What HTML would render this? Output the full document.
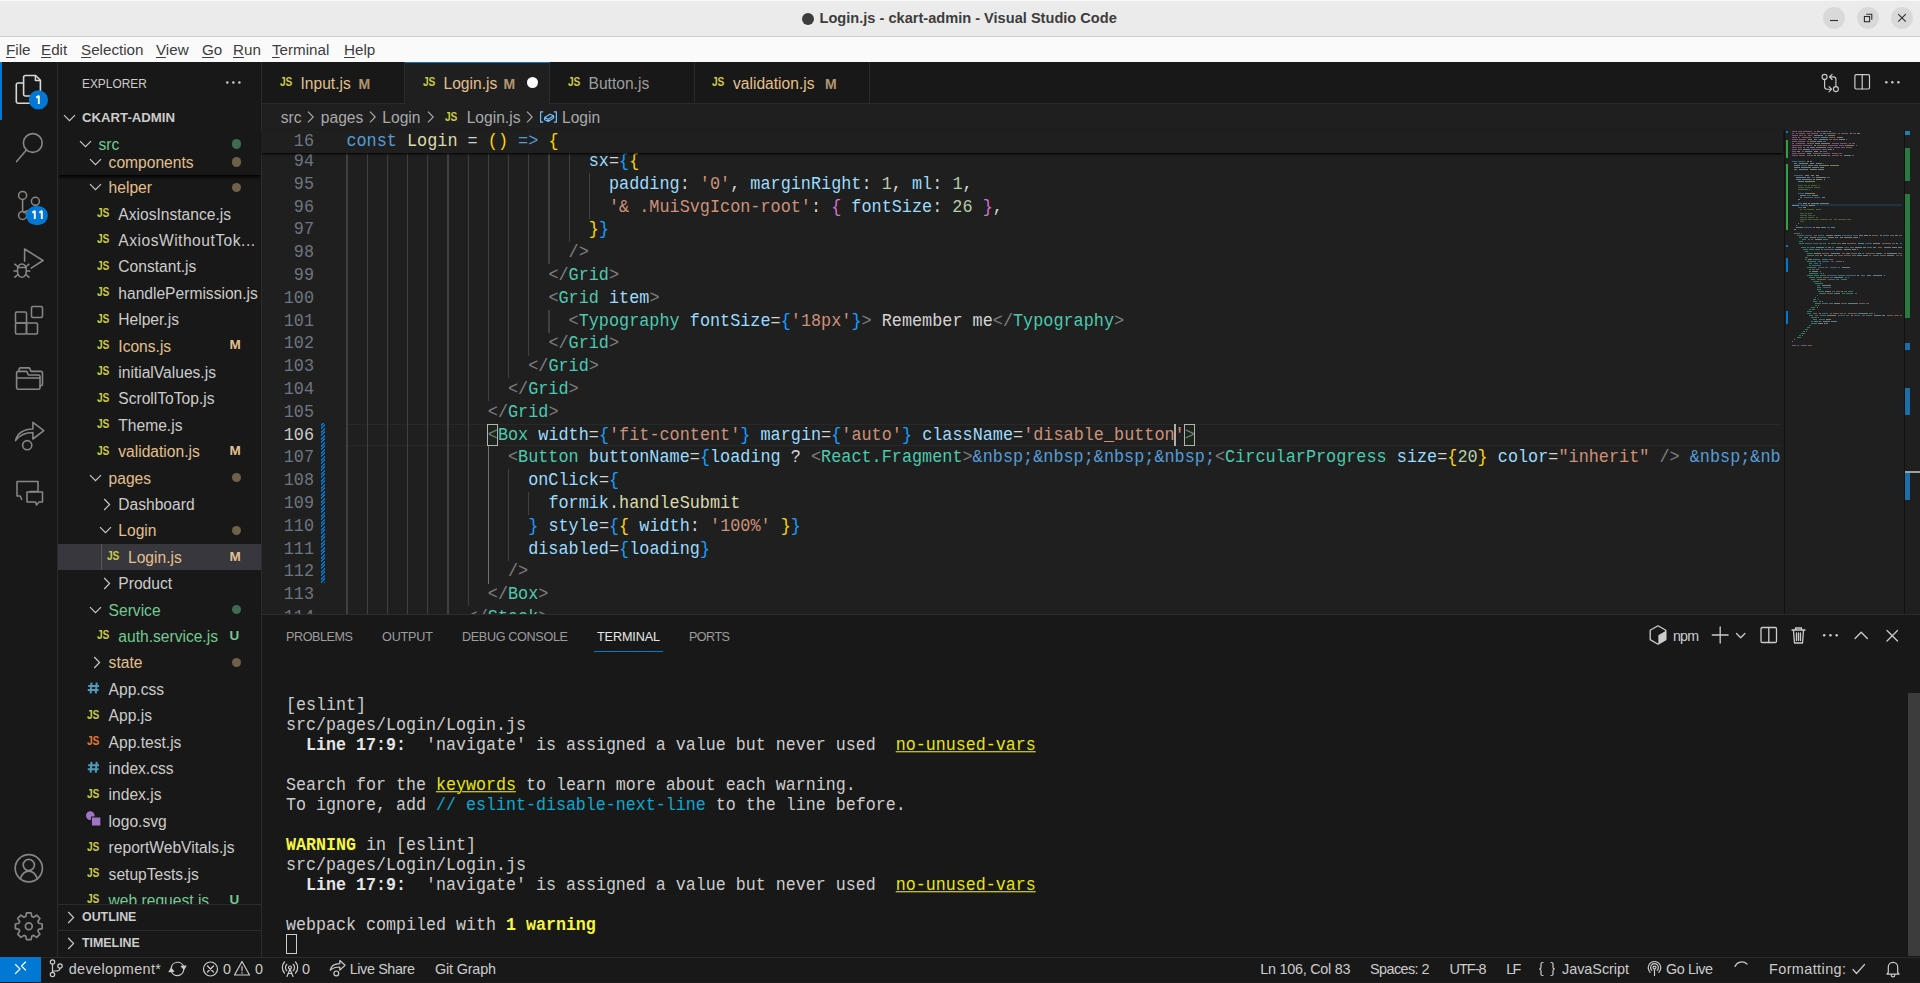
<!DOCTYPE html><html><head><meta charset='utf-8'><style>
*{box-sizing:border-box;margin:0;padding:0}
html,body{width:1920px;height:983px;overflow:hidden;background:#181818;font-family:"Liberation Sans",sans-serif;}
.a{position:absolute}
.mono{font-family:"Liberation Mono",monospace}
svg{position:absolute;overflow:visible}
</style></head><body><div class="a" style="left:0;top:0;width:1920px;height:37px;background:#ebebeb;border-bottom:1px solid #cdcdcd;border-top:1px solid #f7f7f7"></div>
<div class="a" style="left:802.3px;top:13.2px;width:12px;height:12px;border-radius:50%;background:#3d3d3d"></div>
<div class="a" style="left:819.5px;top:10px;font-size:14.6px;font-weight:bold;color:#3d3d3d;white-space:pre">Login.js - ckart-admin - Visual Studio Code</div>
<div class="a" style="left:1823px;top:7px;width:22px;height:22px;border-radius:50%;background:#d9d9d9"></div>
<div class="a" style="left:1857px;top:7px;width:22px;height:22px;border-radius:50%;background:#d9d9d9"></div>
<div class="a" style="left:1891px;top:7px;width:22px;height:22px;border-radius:50%;background:#d9d9d9"></div>
<svg style="left:0;top:0" width="1920" height="37" fill="none" stroke="#2e2e2e" stroke-width="1.1"><path d="M1830 20.5h8"/><rect x="1864.4" y="16.5" width="5.2" height="5.2"/><path d="M1866.4 14.3h5.4v5.4"/><path d="M1898.2 14.1l7.6 7.6M1905.8 14.1l-7.6 7.6"/></svg>
<div class="a" style="left:0;top:37px;width:1920px;height:25px;background:#fafafa"></div>
<div class="a" style="left:6px;top:41px;font-size:15.2px;color:#3d3d3d;white-space:pre"><u style="text-decoration-thickness:1px;text-underline-offset:2px">F</u>ile</div>
<div class="a" style="left:41px;top:41px;font-size:15.2px;color:#3d3d3d;white-space:pre"><u style="text-decoration-thickness:1px;text-underline-offset:2px">E</u>dit</div>
<div class="a" style="left:81px;top:41px;font-size:15.2px;color:#3d3d3d;white-space:pre"><u style="text-decoration-thickness:1px;text-underline-offset:2px">S</u>election</div>
<div class="a" style="left:156px;top:41px;font-size:15.2px;color:#3d3d3d;white-space:pre"><u style="text-decoration-thickness:1px;text-underline-offset:2px">V</u>iew</div>
<div class="a" style="left:202px;top:41px;font-size:15.2px;color:#3d3d3d;white-space:pre"><u style="text-decoration-thickness:1px;text-underline-offset:2px">G</u>o</div>
<div class="a" style="left:233px;top:41px;font-size:15.2px;color:#3d3d3d;white-space:pre"><u style="text-decoration-thickness:1px;text-underline-offset:2px">R</u>un</div>
<div class="a" style="left:272px;top:41px;font-size:15.2px;color:#3d3d3d;white-space:pre"><u style="text-decoration-thickness:1px;text-underline-offset:2px">T</u>erminal</div>
<div class="a" style="left:344px;top:41px;font-size:15.2px;color:#3d3d3d;white-space:pre"><u style="text-decoration-thickness:1px;text-underline-offset:2px">H</u>elp</div>
<div class="a" style="left:0;top:62px;width:58px;height:895px;background:#181818;border-right:1px solid #2b2b2b"></div>
<div class="a" style="left:0;top:62px;width:2.4px;height:57.6px;background:#0078d4"></div>
<svg style="left:0;top:0" width="58" height="983" fill="none" stroke-width="1.55" stroke-linejoin="round" stroke-linecap="round">
<!-- files -->
<path d="M23.6 77.2a1.7 1.7 0 0 1 1.7-1.7H35.6L40.4 80.3V94.3a1.7 1.7 0 0 1-1.7 1.7H25.3a1.7 1.7 0 0 1-1.7-1.7Z" stroke="#d7d7d7" stroke-width="1.6"/>
<path d="M35.4 75.8V80.5H40.2" stroke="#d7d7d7" stroke-width="1.5"/>
<path d="M23.4 83H18a1.7 1.7 0 0 0-1.7 1.7V101.5a1.7 1.7 0 0 0 1.7 1.7H32" stroke="#d7d7d7" stroke-width="1.6"/>
<!-- search -->
<circle cx="32.8" cy="143" r="9.4" stroke="#868686" stroke-width="1.6"/>
<path d="M26.2 150.3L16.6 161.6" stroke="#868686" stroke-width="1.6"/>
<!-- scm -->
<circle cx="22.6" cy="195.4" r="4" stroke="#868686"/>
<circle cx="35.4" cy="201.3" r="4" stroke="#868686"/>
<circle cx="22.6" cy="215.4" r="4" stroke="#868686"/>
<path d="M22.6 199.4V211.4M35.4 205.3c0 3.3-2.3 4.9-5.6 5.2-3 .3-4.9 1-5.8 2.2" stroke="#868686"/>
<!-- debug -->
<path d="M24.6 261.2V249l18.4 11.5-11.8 7.6" stroke="#868686"/>
<path d="M17.5 269.5a4.4 5.6 0 0 1 8.8 0V271.5a4.4 5.8 0 0 1-8.8 0Z M17.6 267.4h8.6" stroke="#868686"/>
<path d="M14.8 264.2l2.8 2.3M29 264.2l-2.8 2.3M14 271h3.4M26.4 271h3.4M14.8 277.2l2.8-2.4M29 277.2l-2.8-2.4" stroke="#868686"/>
<!-- extensions -->
<rect x="15.5" y="312" width="11" height="11" rx="1.2" stroke="#868686"/>
<rect x="15.5" y="323" width="11" height="11" rx="1.2" stroke="#868686"/>
<rect x="26.5" y="323" width="11" height="11" rx="1.2" stroke="#868686"/>
<rect x="31.5" y="306.5" width="11" height="11" rx="1.5" stroke="#868686"/>
<!-- remote explorer / folders -->
<path d="M16.6 388V373a1.6 1.6 0 0 1 1.6-1.6H26.8L28.4 375H38.4a1.6 1.6 0 0 1 1.6 1.6V387.7a1.6 1.6 0 0 1-1.6 1.6H18.2a1.6 1.6 0 0 1-1.6-1.6Z M16.6 378h23.4" stroke="#868686" stroke-width="1.6"/>
<path d="M19 371.4V369.5a1.6 1.6 0 0 1 1.6-1.6H29.4L31 371.4H40.9a1.6 1.6 0 0 1 1.6 1.6V384.2a1.6 1.6 0 0 1-1.6 1.6H40" stroke="#868686" stroke-width="1.6"/>
<!-- live share -->
<path d="M15.6 440.6c1.4-6.8 7.6-11.6 17.3-11.6v-6.6l10.9 8.3-10.9 8.3v-6.5c-7.6 0-13.2 2.5-17.3 8.1z" stroke="#868686" stroke-width="1.6"/>
<circle cx="27.2" cy="445.2" r="4.6" stroke="#868686" stroke-width="1.6"/>
<!-- comments -->
<path d="M17 481.5h21v10H30.5l-.5 0M17 481.5v14.5h3.2l1.5 3.5M17 481.5" stroke="#868686"/>
<path d="M27 492h15.5v10h-3.5l-2.5 3-1-3h-8.5z" stroke="#868686"/>
<!-- account -->
<circle cx="28.8" cy="868.3" r="13.6" stroke="#868686" stroke-width="1.7"/>
<circle cx="28.8" cy="865" r="5.6" stroke="#868686" stroke-width="1.7"/>
<path d="M20.3 878.8c1.8-5 4.8-7.6 8.5-7.6s6.7 2.6 8.5 7.6" stroke="#868686" stroke-width="1.7"/>
</svg>
<svg style="left:0;top:0" width="58" height="983" fill="none"><path d="M38.64 923.26 L42.20 924.00 L42.20 928.60 L38.64 929.34 L37.91 931.11 L39.90 934.15 L36.65 937.40 L33.61 935.41 L31.84 936.14 L31.10 939.70 L26.50 939.70 L25.76 936.14 L23.99 935.41 L20.95 937.40 L17.70 934.15 L19.69 931.11 L18.96 929.34 L15.40 928.60 L15.40 924.00 L18.96 923.26 L19.69 921.49 L17.70 918.45 L20.95 915.20 L23.99 917.19 L25.76 916.46 L26.50 912.90 L31.10 912.90 L31.84 916.46 L33.61 917.19 L36.65 915.20 L39.90 918.45 L37.91 921.49Z" stroke="#868686" stroke-width="1.7" stroke-linejoin="round"/><circle cx="28.8" cy="926.3" r="3.4" stroke="#868686" stroke-width="1.7"/></svg>
<svg style="left:0;top:0" width="58" height="983"><circle cx="38.4" cy="99.9" r="9.6" fill="#0078d4"/><path d="M36.2 97.6l2.6-1.4v7.8" fill="none" stroke="#fff" stroke-width="1.9" stroke-linejoin="round"/></svg>
<svg style="left:0;top:0" width="58" height="983"><rect x="26.2" y="206" width="21.7" height="19" rx="9.5" fill="#0078d4"/><path d="M32.3 212.6l2.5-1.4v7.8M39.3 212.6l2.5-1.4v7.8" fill="none" stroke="#fff" stroke-width="1.9" stroke-linejoin="round"/></svg>
<div class="a" style="left:58px;top:62px;width:204px;height:895px;background:#181818;border-right:1px solid #2b2b2b"></div>
<div class="a" style="left:82px;top:77px;font-size:11.9px;color:#cccccc;white-space:pre">EXPLORER</div>
<svg style="left:0;top:0" width="300" height="100"><circle cx="227.30" cy="82.4" r="1.25" fill="#cccccc"/><circle cx="233.35" cy="82.4" r="1.25" fill="#cccccc"/><circle cx="239.40" cy="82.4" r="1.25" fill="#cccccc"/></svg>
<svg style="left:63px;top:113.6px" width="13" height="8"><path d="M1 1.2L6.5 6.6L12 1.2" fill="none" stroke="#cccccc" stroke-width="1.15"/></svg>
<div class="a" style="left:82px;top:105.4px;height:26.4px;line-height:26.4px;font-size:13.2px;font-weight:bold;color:#cccccc;white-space:pre">CKART-ADMIN</div>
<div class="a" style="left:58px;top:130.8px;width:203px;height:773px;overflow:hidden"><div class="a" style="left:-58px;top:-130.8px;width:300px;height:983px"><svg style="left:89px;top:183.2px" width="13" height="8"><path d="M1 1.2L6.5 6.6L12 1.2" fill="none" stroke="#cccccc" stroke-width="1.15"/></svg><div class="a" style="left:108.6px;top:175.2px;height:26.4px;line-height:26.4px;font-size:15.6px;color:#e2c08d;white-space:pre;">helper</div><div class="a" style="left:231.5px;top:182.6px;width:9.2px;height:9.2px;border-radius:50%;background:#6f604a"></div><div class="a" style="left:97px;top:205.0px;height:16px;line-height:16px;font-size:12.8px;font-weight:bold;color:#cbcb41;transform:scaleX(0.8);transform-origin:left;letter-spacing:-0.3px">JS</div><div class="a" style="left:118.3px;top:201.6px;height:26.4px;line-height:26.4px;font-size:15.6px;color:#cccccc;white-space:pre;">AxiosInstance.js</div><div class="a" style="left:97px;top:231.4px;height:16px;line-height:16px;font-size:12.8px;font-weight:bold;color:#cbcb41;transform:scaleX(0.8);transform-origin:left;letter-spacing:-0.3px">JS</div><div class="a" style="left:118.3px;top:228.0px;height:26.4px;line-height:26.4px;font-size:15.6px;color:#cccccc;white-space:pre;letter-spacing:0.5px">AxiosWithoutTok...</div><div class="a" style="left:97px;top:257.8px;height:16px;line-height:16px;font-size:12.8px;font-weight:bold;color:#cbcb41;transform:scaleX(0.8);transform-origin:left;letter-spacing:-0.3px">JS</div><div class="a" style="left:118.3px;top:254.4px;height:26.4px;line-height:26.4px;font-size:15.6px;color:#cccccc;white-space:pre;">Constant.js</div><div class="a" style="left:97px;top:284.2px;height:16px;line-height:16px;font-size:12.8px;font-weight:bold;color:#cbcb41;transform:scaleX(0.8);transform-origin:left;letter-spacing:-0.3px">JS</div><div class="a" style="left:118.3px;top:280.8px;height:26.4px;line-height:26.4px;font-size:15.6px;color:#cccccc;white-space:pre;">handlePermission.js</div><div class="a" style="left:97px;top:310.6px;height:16px;line-height:16px;font-size:12.8px;font-weight:bold;color:#cbcb41;transform:scaleX(0.8);transform-origin:left;letter-spacing:-0.3px">JS</div><div class="a" style="left:118.3px;top:307.2px;height:26.4px;line-height:26.4px;font-size:15.6px;color:#cccccc;white-space:pre;">Helper.js</div><div class="a" style="left:97px;top:337.0px;height:16px;line-height:16px;font-size:12.8px;font-weight:bold;color:#cbcb41;transform:scaleX(0.8);transform-origin:left;letter-spacing:-0.3px">JS</div><div class="a" style="left:118.3px;top:333.6px;height:26.4px;line-height:26.4px;font-size:15.6px;color:#e2c08d;white-space:pre;">Icons.js</div><div class="a" style="left:229.5px;top:332.4px;height:26.4px;line-height:26.4px;font-size:13.5px;font-weight:bold;color:#e2c08d;">M</div><div class="a" style="left:97px;top:363.4px;height:16px;line-height:16px;font-size:12.8px;font-weight:bold;color:#cbcb41;transform:scaleX(0.8);transform-origin:left;letter-spacing:-0.3px">JS</div><div class="a" style="left:118.3px;top:360.0px;height:26.4px;line-height:26.4px;font-size:15.6px;color:#cccccc;white-space:pre;">initialValues.js</div><div class="a" style="left:97px;top:389.8px;height:16px;line-height:16px;font-size:12.8px;font-weight:bold;color:#cbcb41;transform:scaleX(0.8);transform-origin:left;letter-spacing:-0.3px">JS</div><div class="a" style="left:118.3px;top:386.4px;height:26.4px;line-height:26.4px;font-size:15.6px;color:#cccccc;white-space:pre;">ScrollToTop.js</div><div class="a" style="left:97px;top:416.2px;height:16px;line-height:16px;font-size:12.8px;font-weight:bold;color:#cbcb41;transform:scaleX(0.8);transform-origin:left;letter-spacing:-0.3px">JS</div><div class="a" style="left:118.3px;top:412.8px;height:26.4px;line-height:26.4px;font-size:15.6px;color:#cccccc;white-space:pre;">Theme.js</div><div class="a" style="left:97px;top:442.6px;height:16px;line-height:16px;font-size:12.8px;font-weight:bold;color:#cbcb41;transform:scaleX(0.8);transform-origin:left;letter-spacing:-0.3px">JS</div><div class="a" style="left:118.3px;top:439.2px;height:26.4px;line-height:26.4px;font-size:15.6px;color:#e2c08d;white-space:pre;">validation.js</div><div class="a" style="left:229.5px;top:438.0px;height:26.4px;line-height:26.4px;font-size:13.5px;font-weight:bold;color:#e2c08d;">M</div><svg style="left:89px;top:473.59999999999997px" width="13" height="8"><path d="M1 1.2L6.5 6.6L12 1.2" fill="none" stroke="#cccccc" stroke-width="1.15"/></svg><div class="a" style="left:108.6px;top:465.6px;height:26.4px;line-height:26.4px;font-size:15.6px;color:#e2c08d;white-space:pre;">pages</div><div class="a" style="left:231.5px;top:473.0px;width:9.2px;height:9.2px;border-radius:50%;background:#6f604a"></div><svg style="left:103px;top:497.49999999999994px" width="8" height="13"><path d="M1.2 1L6.6 6.5L1.2 12" fill="none" stroke="#cccccc" stroke-width="1.15"/></svg><div class="a" style="left:118.3px;top:492.0px;height:26.4px;line-height:26.4px;font-size:15.6px;color:#cccccc;white-space:pre;">Dashboard</div><svg style="left:99px;top:526.4000000000001px" width="13" height="8"><path d="M1 1.2L6.5 6.6L12 1.2" fill="none" stroke="#cccccc" stroke-width="1.15"/></svg><div class="a" style="left:118.3px;top:518.4px;height:26.4px;line-height:26.4px;font-size:15.6px;color:#e2c08d;white-space:pre;">Login</div><div class="a" style="left:231.5px;top:525.8px;width:9.2px;height:9.2px;border-radius:50%;background:#6f604a"></div><div class="a" style="left:58px;top:543.6px;width:203px;height:26.4px;background:#37373d"></div><div class="a" style="left:101.3px;top:543.6px;width:1px;height:26.4px;background:#585858"></div><div class="a" style="left:107px;top:548.2px;height:16px;line-height:16px;font-size:12.8px;font-weight:bold;color:#cbcb41;transform:scaleX(0.8);transform-origin:left;letter-spacing:-0.3px">JS</div><div class="a" style="left:128px;top:544.8px;height:26.4px;line-height:26.4px;font-size:15.6px;color:#e2c08d;white-space:pre;">Login.js</div><div class="a" style="left:229.5px;top:543.6px;height:26.4px;line-height:26.4px;font-size:13.5px;font-weight:bold;color:#e2c08d;">M</div><svg style="left:103px;top:576.7px" width="8" height="13"><path d="M1.2 1L6.6 6.5L1.2 12" fill="none" stroke="#cccccc" stroke-width="1.15"/></svg><div class="a" style="left:118.3px;top:571.2px;height:26.4px;line-height:26.4px;font-size:15.6px;color:#cccccc;white-space:pre;">Product</div><svg style="left:89px;top:605.6px" width="13" height="8"><path d="M1 1.2L6.5 6.6L12 1.2" fill="none" stroke="#cccccc" stroke-width="1.15"/></svg><div class="a" style="left:108.6px;top:597.6px;height:26.4px;line-height:26.4px;font-size:15.6px;color:#73c991;white-space:pre;">Service</div><div class="a" style="left:231.5px;top:605.0px;width:9.2px;height:9.2px;border-radius:50%;background:#3d6b4f"></div><div class="a" style="left:97px;top:627.4px;height:16px;line-height:16px;font-size:12.8px;font-weight:bold;color:#cbcb41;transform:scaleX(0.8);transform-origin:left;letter-spacing:-0.3px">JS</div><div class="a" style="left:118.3px;top:624.0px;height:26.4px;line-height:26.4px;font-size:15.6px;color:#73c991;white-space:pre;">auth.service.js</div><div class="a" style="left:229.5px;top:622.8px;height:26.4px;line-height:26.4px;font-size:13.5px;font-weight:bold;color:#73c991;">U</div><svg style="left:93px;top:655.9000000000001px" width="8" height="13"><path d="M1.2 1L6.6 6.5L1.2 12" fill="none" stroke="#cccccc" stroke-width="1.15"/></svg><div class="a" style="left:108.6px;top:650.4px;height:26.4px;line-height:26.4px;font-size:15.6px;color:#e2c08d;white-space:pre;">state</div><div class="a" style="left:231.5px;top:657.8px;width:9.2px;height:9.2px;border-radius:50%;background:#6f604a"></div><svg style="left:0;top:0" width="300" height="983" fill="none" stroke="#519aba" stroke-width="2"><path d="M91.5 682.6L90.6 693.4M96.7 682.6L95.8 693.4M88.2 686.0H99.0M87.8 690.0H98.6"/></svg><div class="a" style="left:108.6px;top:676.8px;height:26.4px;line-height:26.4px;font-size:15.6px;color:#cccccc;white-space:pre;">App.css</div><div class="a" style="left:87px;top:706.6px;height:16px;line-height:16px;font-size:12.8px;font-weight:bold;color:#cbcb41;transform:scaleX(0.8);transform-origin:left;letter-spacing:-0.3px">JS</div><div class="a" style="left:108.6px;top:703.2px;height:26.4px;line-height:26.4px;font-size:15.6px;color:#cccccc;white-space:pre;">App.js</div><div class="a" style="left:87px;top:733.0px;height:16px;line-height:16px;font-size:12.8px;font-weight:bold;color:#e37933;transform:scaleX(0.8);transform-origin:left;letter-spacing:-0.3px">JS</div><div class="a" style="left:108.6px;top:729.6px;height:26.4px;line-height:26.4px;font-size:15.6px;color:#cccccc;white-space:pre;">App.test.js</div><svg style="left:0;top:0" width="300" height="983" fill="none" stroke="#519aba" stroke-width="2"><path d="M91.5 761.8L90.6 772.6M96.7 761.8L95.8 772.6M88.2 765.2H99.0M87.8 769.2H98.6"/></svg><div class="a" style="left:108.6px;top:756.0px;height:26.4px;line-height:26.4px;font-size:15.6px;color:#cccccc;white-space:pre;">index.css</div><div class="a" style="left:87px;top:785.8px;height:16px;line-height:16px;font-size:12.8px;font-weight:bold;color:#cbcb41;transform:scaleX(0.8);transform-origin:left;letter-spacing:-0.3px">JS</div><div class="a" style="left:108.6px;top:782.4px;height:26.4px;line-height:26.4px;font-size:15.6px;color:#cccccc;white-space:pre;">index.js</div><svg style="left:0;top:0" width="300" height="983"><circle cx="90.3" cy="815.6" r="4.3" fill="#a074c4"/><rect x="91.4" y="817.0" width="9.5" height="9" fill="#a074c4" stroke="#181818" stroke-width="1"/></svg><div class="a" style="left:108.6px;top:808.8px;height:26.4px;line-height:26.4px;font-size:15.6px;color:#cccccc;white-space:pre;">logo.svg</div><div class="a" style="left:87px;top:838.6px;height:16px;line-height:16px;font-size:12.8px;font-weight:bold;color:#cbcb41;transform:scaleX(0.8);transform-origin:left;letter-spacing:-0.3px">JS</div><div class="a" style="left:108.6px;top:835.2px;height:26.4px;line-height:26.4px;font-size:15.6px;color:#cccccc;white-space:pre;">reportWebVitals.js</div><div class="a" style="left:87px;top:865.0px;height:16px;line-height:16px;font-size:12.8px;font-weight:bold;color:#cbcb41;transform:scaleX(0.8);transform-origin:left;letter-spacing:-0.3px">JS</div><div class="a" style="left:108.6px;top:861.6px;height:26.4px;line-height:26.4px;font-size:15.6px;color:#cccccc;white-space:pre;">setupTests.js</div><div class="a" style="left:87px;top:891.4px;height:16px;line-height:16px;font-size:12.8px;font-weight:bold;color:#cbcb41;transform:scaleX(0.8);transform-origin:left;letter-spacing:-0.3px">JS</div><div class="a" style="left:108.6px;top:888.0px;height:26.4px;line-height:26.4px;font-size:15.6px;color:#73c991;white-space:pre;">web.request.js</div><div class="a" style="left:229.5px;top:886.8px;height:26.4px;line-height:26.4px;font-size:13.5px;font-weight:bold;color:#73c991;">U</div></div></div>
<div class="a" style="left:58px;top:130.8px;width:203px;height:50px;overflow:hidden"><div class="a" style="left:0;top:0;width:203px;height:44.4px;overflow:visible"><div class="a" style="left:0;top:0;width:203px;height:44.4px;background:#181818;box-shadow:0 3px 3px -1px #000"></div><div class="a" style="left:-58px;top:-130.8px;width:300px;height:983px"><svg style="left:89px;top:158px" width="13" height="8"><path d="M1 1.2L6.5 6.6L12 1.2" fill="none" stroke="#cccccc" stroke-width="1.15"/></svg><div class="a" style="left:108.6px;top:150.0px;height:26.4px;line-height:26.4px;font-size:15.6px;color:#e2c08d;white-space:pre;">components</div><div class="a" style="left:231.5px;top:157.4px;width:9.2px;height:9.2px;border-radius:50%;background:#6f604a"></div></div><div class="a" style="left:0;top:0;width:203px;height:26.4px;background:#181818"></div><div class="a" style="left:-58px;top:-130.8px;width:300px;height:983px"><svg style="left:79px;top:140px" width="13" height="8"><path d="M1 1.2L6.5 6.6L12 1.2" fill="none" stroke="#cccccc" stroke-width="1.15"/></svg><div class="a" style="left:98.5px;top:132.0px;height:26.4px;line-height:26.4px;font-size:15.6px;color:#73c991;white-space:pre;">src</div><div class="a" style="left:231.5px;top:139.4px;width:9.2px;height:9.2px;border-radius:50%;background:#3d6b4f"></div></div></div></div>
<div class="a" style="left:58px;top:903.8px;width:203px;height:26.4px;border-top:1px solid #2b2b2b;background:#181818"></div>
<svg style="left:67px;top:910.6999999999999px" width="8" height="13"><path d="M1.2 1L6.6 6.5L1.2 12" fill="none" stroke="#cccccc" stroke-width="1.15"/></svg>
<div class="a" style="left:82px;top:903.8px;height:26.4px;line-height:27px;font-size:12.4px;font-weight:bold;color:#cccccc">OUTLINE</div>
<div class="a" style="left:58px;top:930.1999999999999px;width:203px;height:26.4px;border-top:1px solid #2b2b2b;background:#181818"></div>
<svg style="left:67px;top:937.0999999999999px" width="8" height="13"><path d="M1.2 1L6.6 6.5L1.2 12" fill="none" stroke="#cccccc" stroke-width="1.15"/></svg>
<div class="a" style="left:82px;top:930.1999999999999px;height:26.4px;line-height:27px;font-size:12.4px;font-weight:bold;color:#cccccc">TIMELINE</div>
<div class="a" style="left:262px;top:62px;width:1658px;height:42px;background:#181818;border-bottom:1px solid #2b2b2b"></div>
<div class="a" style="left:262px;top:62px;width:143px;height:41px;border-right:1px solid #2b2b2b"></div>
<div class="a" style="left:279.5px;top:74.0px;height:16px;line-height:16px;font-size:12.8px;font-weight:bold;color:#cbcb41;transform:scaleX(0.8);transform-origin:left;letter-spacing:-0.3px">JS</div>
<div class="a" style="left:300.5px;top:71.2px;height:26.4px;line-height:26.4px;font-size:15.6px;color:#e2c08d;white-space:pre">Input.js</div>
<div class="a" style="left:358.5px;top:70.5px;height:26.4px;line-height:26.4px;font-size:14px;font-weight:bold;color:#e2c08d;opacity:.75">M</div>
<div class="a" style="left:405px;top:62px;width:145px;height:42px;background:#1f1f1f;border-top:1.2px solid #0078d4;border-right:1px solid #2b2b2b"></div>
<div class="a" style="left:422.5px;top:74.0px;height:16px;line-height:16px;font-size:12.8px;font-weight:bold;color:#cbcb41;transform:scaleX(0.8);transform-origin:left;letter-spacing:-0.3px">JS</div>
<div class="a" style="left:443.5px;top:71.2px;height:26.4px;line-height:26.4px;font-size:15.6px;color:#e2c08d;white-space:pre">Login.js</div>
<div class="a" style="left:503.5px;top:70.5px;height:26.4px;line-height:26.4px;font-size:14px;font-weight:bold;color:#e2c08d;opacity:.75">M</div>
<div class="a" style="left:527.4px;top:77px;width:11px;height:11px;border-radius:50%;background:#ffffff"></div>
<div class="a" style="left:550px;top:62px;width:144.5px;height:41px;border-right:1px solid #2b2b2b"></div>
<div class="a" style="left:567.5px;top:74.0px;height:16px;line-height:16px;font-size:12.8px;font-weight:bold;color:#cbcb41;transform:scaleX(0.8);transform-origin:left;letter-spacing:-0.3px">JS</div>
<div class="a" style="left:588.5px;top:71.2px;height:26.4px;line-height:26.4px;font-size:15.6px;color:#9d9d9d;white-space:pre">Button.js</div>
<div class="a" style="left:694.5px;top:62px;width:175.5px;height:41px;border-right:1px solid #2b2b2b"></div>
<div class="a" style="left:712.0px;top:74.0px;height:16px;line-height:16px;font-size:12.8px;font-weight:bold;color:#cbcb41;transform:scaleX(0.8);transform-origin:left;letter-spacing:-0.3px">JS</div>
<div class="a" style="left:733.0px;top:71.2px;height:26.4px;line-height:26.4px;font-size:15.6px;color:#e2c08d;white-space:pre">validation.js</div>
<div class="a" style="left:825px;top:70.5px;height:26.4px;line-height:26.4px;font-size:14px;font-weight:bold;color:#e2c08d;opacity:.75">M</div>
<svg style="left:0;top:0" width="1920" height="120" fill="none" stroke="#cccccc" stroke-width="1.15" stroke-linecap="round" stroke-linejoin="round">
<circle cx="1824.6" cy="76.9" r="2.5"/><circle cx="1835.9" cy="89.1" r="2.5"/>
<path d="M1824.6 79.4V86.8a2.4 2.4 0 0 0 2.4 2.4h4.2M1829 86.6l2.6 2.6-2.6 2.6"/>
<path d="M1835.9 86.6V79.3a2.4 2.4 0 0 0-2.4-2.4h-4M1832.1 74.3l-2.6 2.6 2.6 2.6"/>
<rect x="1854.9" y="74.6" width="14.6" height="14.4" rx="1.2" stroke-width="1.2"/><path d="M1862.2 74.6v14.4" stroke-width="1.2"/>
<circle cx="1886.3" cy="82.3" r="1.25" fill="#cccccc" stroke="none"/><circle cx="1892.3" cy="82.3" r="1.25" fill="#cccccc" stroke="none"/><circle cx="1898.4" cy="82.3" r="1.25" fill="#cccccc" stroke="none"/>
</svg>
<div class="a" style="left:262px;top:104px;width:1658px;height:510px;background:#1f1f1f"></div>
<div class="a" style="left:280.8px;top:105.3px;height:26.4px;line-height:26.4px;font-size:15.6px;color:#a9a9a9;white-space:pre">src</div>
<div class="a" style="left:320.8px;top:105.3px;height:26.4px;line-height:26.4px;font-size:15.6px;color:#a9a9a9;white-space:pre">pages</div>
<div class="a" style="left:382.3px;top:105.3px;height:26.4px;line-height:26.4px;font-size:15.6px;color:#a9a9a9;white-space:pre">Login</div>
<div class="a" style="left:466.7px;top:105.3px;height:26.4px;line-height:26.4px;font-size:15.6px;color:#a9a9a9;white-space:pre">Login.js</div>
<div class="a" style="left:562px;top:105.3px;height:26.4px;line-height:26.4px;font-size:15.6px;color:#a9a9a9;white-space:pre">Login</div>
<svg style="left:306.9px;top:110px" width="9" height="15"><path d="M1 1.6L6.2 7L1 12.4" fill="none" stroke="#a9a9a9" stroke-width="1.15"/></svg>
<svg style="left:369.4px;top:110px" width="9" height="15"><path d="M1 1.6L6.2 7L1 12.4" fill="none" stroke="#a9a9a9" stroke-width="1.15"/></svg>
<svg style="left:427px;top:110px" width="9" height="15"><path d="M1 1.6L6.2 7L1 12.4" fill="none" stroke="#a9a9a9" stroke-width="1.15"/></svg>
<svg style="left:526px;top:110px" width="9" height="15"><path d="M1 1.6L6.2 7L1 12.4" fill="none" stroke="#a9a9a9" stroke-width="1.15"/></svg>
<div class="a" style="left:444.8px;top:108.9px;height:16px;line-height:16px;font-size:12.8px;font-weight:bold;color:#cbcb41;transform:scaleX(0.8);transform-origin:left;letter-spacing:-0.3px">JS</div>
<svg style="left:0;top:0" width="700" height="140" fill="none" stroke="#75beff" stroke-width="1.2" stroke-linejoin="round"><path d="M543.2 111.8H540.6V122.2H543.2M553.8 111.8H556.4V122.2H553.8"/><path d="M544.6 117.6l5.4-3.4 3.6 1.6v2.2l-5.4 3.4-3.6-1.6z M544.6 117.6l3.6 1.6 5.4-3.4M548.2 119.2v2.2"/></svg>
<div class="a" style="left:262px;top:130.4px;width:1520.3px;height:483.6px;overflow:hidden"><div class="a" style="left:-262px;top:-130.4px;width:1920px;height:983px"><div class="a" style="left:345.4px;top:423.6px;width:1437.6px;height:22.8px;border:1.5px solid #282828;border-left:none;border-right:none"></div><div class="a" style="left:346.4px;top:150.0px;width:1.2px;height:23.2px;background:#404040"></div><div class="a" style="left:366.6px;top:150.0px;width:1.2px;height:23.2px;background:#404040"></div><div class="a" style="left:386.8px;top:150.0px;width:1.2px;height:23.2px;background:#404040"></div><div class="a" style="left:407.0px;top:150.0px;width:1.2px;height:23.2px;background:#404040"></div><div class="a" style="left:427.2px;top:150.0px;width:1.2px;height:23.2px;background:#404040"></div><div class="a" style="left:447.4px;top:150.0px;width:1.2px;height:23.2px;background:#404040"></div><div class="a" style="left:467.6px;top:150.0px;width:1.2px;height:23.2px;background:#404040"></div><div class="a" style="left:487.8px;top:150.0px;width:1.2px;height:23.2px;background:#404040"></div><div class="a" style="left:508.0px;top:150.0px;width:1.2px;height:23.2px;background:#404040"></div><div class="a" style="left:528.2px;top:150.0px;width:1.2px;height:23.2px;background:#404040"></div><div class="a" style="left:548.4px;top:150.0px;width:1.2px;height:23.2px;background:#404040"></div><div class="a" style="left:568.6px;top:150.0px;width:1.2px;height:23.2px;background:#404040"></div><div class="a mono" style="left:262px;top:150.0px;width:52px;text-align:right;height:22.8px;line-height:22.8px;font-size:16.8px;color:#6e7681;transform:translateY(0.5px) scaleY(1.12);transform-origin:0 11px">94</div><div class="a mono" style="left:346.4px;top:150.0px;height:22.8px;line-height:22.8px;font-size:16.83px;white-space:pre;transform:translateY(0.5px) scaleY(1.12);transform-origin:0 11px"><span style="color:#d4d4d4">                        </span><span style="color:#9cdcfe">sx</span><span style="color:#d4d4d4">=</span><span style="color:#179fff">{</span><span style="color:#ffd700">{</span></div><div class="a" style="left:346.4px;top:172.8px;width:1.2px;height:23.2px;background:#404040"></div><div class="a" style="left:366.6px;top:172.8px;width:1.2px;height:23.2px;background:#404040"></div><div class="a" style="left:386.8px;top:172.8px;width:1.2px;height:23.2px;background:#404040"></div><div class="a" style="left:407.0px;top:172.8px;width:1.2px;height:23.2px;background:#404040"></div><div class="a" style="left:427.2px;top:172.8px;width:1.2px;height:23.2px;background:#404040"></div><div class="a" style="left:447.4px;top:172.8px;width:1.2px;height:23.2px;background:#404040"></div><div class="a" style="left:467.6px;top:172.8px;width:1.2px;height:23.2px;background:#404040"></div><div class="a" style="left:487.8px;top:172.8px;width:1.2px;height:23.2px;background:#404040"></div><div class="a" style="left:508.0px;top:172.8px;width:1.2px;height:23.2px;background:#404040"></div><div class="a" style="left:528.2px;top:172.8px;width:1.2px;height:23.2px;background:#404040"></div><div class="a" style="left:548.4px;top:172.8px;width:1.2px;height:23.2px;background:#404040"></div><div class="a" style="left:568.6px;top:172.8px;width:1.2px;height:23.2px;background:#404040"></div><div class="a" style="left:588.8px;top:172.8px;width:1.2px;height:23.2px;background:#404040"></div><div class="a mono" style="left:262px;top:172.8px;width:52px;text-align:right;height:22.8px;line-height:22.8px;font-size:16.8px;color:#6e7681;transform:translateY(0.5px) scaleY(1.12);transform-origin:0 11px">95</div><div class="a mono" style="left:346.4px;top:172.8px;height:22.8px;line-height:22.8px;font-size:16.83px;white-space:pre;transform:translateY(0.5px) scaleY(1.12);transform-origin:0 11px"><span style="color:#d4d4d4">                          </span><span style="color:#9cdcfe">padding</span><span style="color:#d4d4d4">: </span><span style="color:#ce9178">'0'</span><span style="color:#d4d4d4">, </span><span style="color:#9cdcfe">marginRight</span><span style="color:#d4d4d4">: </span><span style="color:#b5cea8">1</span><span style="color:#d4d4d4">, </span><span style="color:#9cdcfe">ml</span><span style="color:#d4d4d4">: </span><span style="color:#b5cea8">1</span><span style="color:#d4d4d4">,</span></div><div class="a" style="left:346.4px;top:195.6px;width:1.2px;height:23.2px;background:#404040"></div><div class="a" style="left:366.6px;top:195.6px;width:1.2px;height:23.2px;background:#404040"></div><div class="a" style="left:386.8px;top:195.6px;width:1.2px;height:23.2px;background:#404040"></div><div class="a" style="left:407.0px;top:195.6px;width:1.2px;height:23.2px;background:#404040"></div><div class="a" style="left:427.2px;top:195.6px;width:1.2px;height:23.2px;background:#404040"></div><div class="a" style="left:447.4px;top:195.6px;width:1.2px;height:23.2px;background:#404040"></div><div class="a" style="left:467.6px;top:195.6px;width:1.2px;height:23.2px;background:#404040"></div><div class="a" style="left:487.8px;top:195.6px;width:1.2px;height:23.2px;background:#404040"></div><div class="a" style="left:508.0px;top:195.6px;width:1.2px;height:23.2px;background:#404040"></div><div class="a" style="left:528.2px;top:195.6px;width:1.2px;height:23.2px;background:#404040"></div><div class="a" style="left:548.4px;top:195.6px;width:1.2px;height:23.2px;background:#404040"></div><div class="a" style="left:568.6px;top:195.6px;width:1.2px;height:23.2px;background:#404040"></div><div class="a" style="left:588.8px;top:195.6px;width:1.2px;height:23.2px;background:#404040"></div><div class="a mono" style="left:262px;top:195.6px;width:52px;text-align:right;height:22.8px;line-height:22.8px;font-size:16.8px;color:#6e7681;transform:translateY(0.5px) scaleY(1.12);transform-origin:0 11px">96</div><div class="a mono" style="left:346.4px;top:195.6px;height:22.8px;line-height:22.8px;font-size:16.83px;white-space:pre;transform:translateY(0.5px) scaleY(1.12);transform-origin:0 11px"><span style="color:#d4d4d4">                          </span><span style="color:#ce9178">'&amp; .MuiSvgIcon-root'</span><span style="color:#d4d4d4">: </span><span style="color:#da70d6">{</span><span style="color:#d4d4d4"> </span><span style="color:#9cdcfe">fontSize</span><span style="color:#d4d4d4">: </span><span style="color:#b5cea8">26</span><span style="color:#d4d4d4"> </span><span style="color:#da70d6">}</span><span style="color:#d4d4d4">,</span></div><div class="a" style="left:346.4px;top:218.4px;width:1.2px;height:23.2px;background:#404040"></div><div class="a" style="left:366.6px;top:218.4px;width:1.2px;height:23.2px;background:#404040"></div><div class="a" style="left:386.8px;top:218.4px;width:1.2px;height:23.2px;background:#404040"></div><div class="a" style="left:407.0px;top:218.4px;width:1.2px;height:23.2px;background:#404040"></div><div class="a" style="left:427.2px;top:218.4px;width:1.2px;height:23.2px;background:#404040"></div><div class="a" style="left:447.4px;top:218.4px;width:1.2px;height:23.2px;background:#404040"></div><div class="a" style="left:467.6px;top:218.4px;width:1.2px;height:23.2px;background:#404040"></div><div class="a" style="left:487.8px;top:218.4px;width:1.2px;height:23.2px;background:#404040"></div><div class="a" style="left:508.0px;top:218.4px;width:1.2px;height:23.2px;background:#404040"></div><div class="a" style="left:528.2px;top:218.4px;width:1.2px;height:23.2px;background:#404040"></div><div class="a" style="left:548.4px;top:218.4px;width:1.2px;height:23.2px;background:#404040"></div><div class="a" style="left:568.6px;top:218.4px;width:1.2px;height:23.2px;background:#404040"></div><div class="a mono" style="left:262px;top:218.4px;width:52px;text-align:right;height:22.8px;line-height:22.8px;font-size:16.8px;color:#6e7681;transform:translateY(0.5px) scaleY(1.12);transform-origin:0 11px">97</div><div class="a mono" style="left:346.4px;top:218.4px;height:22.8px;line-height:22.8px;font-size:16.83px;white-space:pre;transform:translateY(0.5px) scaleY(1.12);transform-origin:0 11px"><span style="color:#d4d4d4">                        </span><span style="color:#ffd700">}</span><span style="color:#179fff">}</span></div><div class="a" style="left:346.4px;top:241.2px;width:1.2px;height:23.2px;background:#404040"></div><div class="a" style="left:366.6px;top:241.2px;width:1.2px;height:23.2px;background:#404040"></div><div class="a" style="left:386.8px;top:241.2px;width:1.2px;height:23.2px;background:#404040"></div><div class="a" style="left:407.0px;top:241.2px;width:1.2px;height:23.2px;background:#404040"></div><div class="a" style="left:427.2px;top:241.2px;width:1.2px;height:23.2px;background:#404040"></div><div class="a" style="left:447.4px;top:241.2px;width:1.2px;height:23.2px;background:#404040"></div><div class="a" style="left:467.6px;top:241.2px;width:1.2px;height:23.2px;background:#404040"></div><div class="a" style="left:487.8px;top:241.2px;width:1.2px;height:23.2px;background:#404040"></div><div class="a" style="left:508.0px;top:241.2px;width:1.2px;height:23.2px;background:#404040"></div><div class="a" style="left:528.2px;top:241.2px;width:1.2px;height:23.2px;background:#404040"></div><div class="a" style="left:548.4px;top:241.2px;width:1.2px;height:23.2px;background:#404040"></div><div class="a mono" style="left:262px;top:241.2px;width:52px;text-align:right;height:22.8px;line-height:22.8px;font-size:16.8px;color:#6e7681;transform:translateY(0.5px) scaleY(1.12);transform-origin:0 11px">98</div><div class="a mono" style="left:346.4px;top:241.2px;height:22.8px;line-height:22.8px;font-size:16.83px;white-space:pre;transform:translateY(0.5px) scaleY(1.12);transform-origin:0 11px"><span style="color:#d4d4d4">                      </span><span style="color:#808080">/&gt;</span></div><div class="a" style="left:346.4px;top:264.0px;width:1.2px;height:23.2px;background:#404040"></div><div class="a" style="left:366.6px;top:264.0px;width:1.2px;height:23.2px;background:#404040"></div><div class="a" style="left:386.8px;top:264.0px;width:1.2px;height:23.2px;background:#404040"></div><div class="a" style="left:407.0px;top:264.0px;width:1.2px;height:23.2px;background:#404040"></div><div class="a" style="left:427.2px;top:264.0px;width:1.2px;height:23.2px;background:#404040"></div><div class="a" style="left:447.4px;top:264.0px;width:1.2px;height:23.2px;background:#404040"></div><div class="a" style="left:467.6px;top:264.0px;width:1.2px;height:23.2px;background:#404040"></div><div class="a" style="left:487.8px;top:264.0px;width:1.2px;height:23.2px;background:#404040"></div><div class="a" style="left:508.0px;top:264.0px;width:1.2px;height:23.2px;background:#404040"></div><div class="a" style="left:528.2px;top:264.0px;width:1.2px;height:23.2px;background:#404040"></div><div class="a mono" style="left:262px;top:264.0px;width:52px;text-align:right;height:22.8px;line-height:22.8px;font-size:16.8px;color:#6e7681;transform:translateY(0.5px) scaleY(1.12);transform-origin:0 11px">99</div><div class="a mono" style="left:346.4px;top:264.0px;height:22.8px;line-height:22.8px;font-size:16.83px;white-space:pre;transform:translateY(0.5px) scaleY(1.12);transform-origin:0 11px"><span style="color:#d4d4d4">                    </span><span style="color:#808080">&lt;/</span><span style="color:#4ec9b0">Grid</span><span style="color:#808080">&gt;</span></div><div class="a" style="left:346.4px;top:286.8px;width:1.2px;height:23.2px;background:#404040"></div><div class="a" style="left:366.6px;top:286.8px;width:1.2px;height:23.2px;background:#404040"></div><div class="a" style="left:386.8px;top:286.8px;width:1.2px;height:23.2px;background:#404040"></div><div class="a" style="left:407.0px;top:286.8px;width:1.2px;height:23.2px;background:#404040"></div><div class="a" style="left:427.2px;top:286.8px;width:1.2px;height:23.2px;background:#404040"></div><div class="a" style="left:447.4px;top:286.8px;width:1.2px;height:23.2px;background:#404040"></div><div class="a" style="left:467.6px;top:286.8px;width:1.2px;height:23.2px;background:#404040"></div><div class="a" style="left:487.8px;top:286.8px;width:1.2px;height:23.2px;background:#404040"></div><div class="a" style="left:508.0px;top:286.8px;width:1.2px;height:23.2px;background:#404040"></div><div class="a" style="left:528.2px;top:286.8px;width:1.2px;height:23.2px;background:#404040"></div><div class="a mono" style="left:262px;top:286.8px;width:52px;text-align:right;height:22.8px;line-height:22.8px;font-size:16.8px;color:#6e7681;transform:translateY(0.5px) scaleY(1.12);transform-origin:0 11px">100</div><div class="a mono" style="left:346.4px;top:286.8px;height:22.8px;line-height:22.8px;font-size:16.83px;white-space:pre;transform:translateY(0.5px) scaleY(1.12);transform-origin:0 11px"><span style="color:#d4d4d4">                    </span><span style="color:#808080">&lt;</span><span style="color:#4ec9b0">Grid</span><span style="color:#d4d4d4"> </span><span style="color:#9cdcfe">item</span><span style="color:#808080">&gt;</span></div><div class="a" style="left:346.4px;top:309.6px;width:1.2px;height:23.2px;background:#404040"></div><div class="a" style="left:366.6px;top:309.6px;width:1.2px;height:23.2px;background:#404040"></div><div class="a" style="left:386.8px;top:309.6px;width:1.2px;height:23.2px;background:#404040"></div><div class="a" style="left:407.0px;top:309.6px;width:1.2px;height:23.2px;background:#404040"></div><div class="a" style="left:427.2px;top:309.6px;width:1.2px;height:23.2px;background:#404040"></div><div class="a" style="left:447.4px;top:309.6px;width:1.2px;height:23.2px;background:#404040"></div><div class="a" style="left:467.6px;top:309.6px;width:1.2px;height:23.2px;background:#404040"></div><div class="a" style="left:487.8px;top:309.6px;width:1.2px;height:23.2px;background:#404040"></div><div class="a" style="left:508.0px;top:309.6px;width:1.2px;height:23.2px;background:#404040"></div><div class="a" style="left:528.2px;top:309.6px;width:1.2px;height:23.2px;background:#404040"></div><div class="a" style="left:548.4px;top:309.6px;width:1.2px;height:23.2px;background:#404040"></div><div class="a mono" style="left:262px;top:309.6px;width:52px;text-align:right;height:22.8px;line-height:22.8px;font-size:16.8px;color:#6e7681;transform:translateY(0.5px) scaleY(1.12);transform-origin:0 11px">101</div><div class="a mono" style="left:346.4px;top:309.6px;height:22.8px;line-height:22.8px;font-size:16.83px;white-space:pre;transform:translateY(0.5px) scaleY(1.12);transform-origin:0 11px"><span style="color:#d4d4d4">                      </span><span style="color:#808080">&lt;</span><span style="color:#4ec9b0">Typography</span><span style="color:#d4d4d4"> </span><span style="color:#9cdcfe">fontSize</span><span style="color:#d4d4d4">=</span><span style="color:#179fff">{</span><span style="color:#ce9178">'18px'</span><span style="color:#179fff">}</span><span style="color:#808080">&gt;</span><span style="color:#d4d4d4"> Remember me</span><span style="color:#808080">&lt;/</span><span style="color:#4ec9b0">Typography</span><span style="color:#808080">&gt;</span></div><div class="a" style="left:346.4px;top:332.4px;width:1.2px;height:23.2px;background:#404040"></div><div class="a" style="left:366.6px;top:332.4px;width:1.2px;height:23.2px;background:#404040"></div><div class="a" style="left:386.8px;top:332.4px;width:1.2px;height:23.2px;background:#404040"></div><div class="a" style="left:407.0px;top:332.4px;width:1.2px;height:23.2px;background:#404040"></div><div class="a" style="left:427.2px;top:332.4px;width:1.2px;height:23.2px;background:#404040"></div><div class="a" style="left:447.4px;top:332.4px;width:1.2px;height:23.2px;background:#404040"></div><div class="a" style="left:467.6px;top:332.4px;width:1.2px;height:23.2px;background:#404040"></div><div class="a" style="left:487.8px;top:332.4px;width:1.2px;height:23.2px;background:#404040"></div><div class="a" style="left:508.0px;top:332.4px;width:1.2px;height:23.2px;background:#404040"></div><div class="a" style="left:528.2px;top:332.4px;width:1.2px;height:23.2px;background:#404040"></div><div class="a mono" style="left:262px;top:332.4px;width:52px;text-align:right;height:22.8px;line-height:22.8px;font-size:16.8px;color:#6e7681;transform:translateY(0.5px) scaleY(1.12);transform-origin:0 11px">102</div><div class="a mono" style="left:346.4px;top:332.4px;height:22.8px;line-height:22.8px;font-size:16.83px;white-space:pre;transform:translateY(0.5px) scaleY(1.12);transform-origin:0 11px"><span style="color:#d4d4d4">                    </span><span style="color:#808080">&lt;/</span><span style="color:#4ec9b0">Grid</span><span style="color:#808080">&gt;</span></div><div class="a" style="left:346.4px;top:355.2px;width:1.2px;height:23.2px;background:#404040"></div><div class="a" style="left:366.6px;top:355.2px;width:1.2px;height:23.2px;background:#404040"></div><div class="a" style="left:386.8px;top:355.2px;width:1.2px;height:23.2px;background:#404040"></div><div class="a" style="left:407.0px;top:355.2px;width:1.2px;height:23.2px;background:#404040"></div><div class="a" style="left:427.2px;top:355.2px;width:1.2px;height:23.2px;background:#404040"></div><div class="a" style="left:447.4px;top:355.2px;width:1.2px;height:23.2px;background:#404040"></div><div class="a" style="left:467.6px;top:355.2px;width:1.2px;height:23.2px;background:#404040"></div><div class="a" style="left:487.8px;top:355.2px;width:1.2px;height:23.2px;background:#404040"></div><div class="a" style="left:508.0px;top:355.2px;width:1.2px;height:23.2px;background:#404040"></div><div class="a mono" style="left:262px;top:355.2px;width:52px;text-align:right;height:22.8px;line-height:22.8px;font-size:16.8px;color:#6e7681;transform:translateY(0.5px) scaleY(1.12);transform-origin:0 11px">103</div><div class="a mono" style="left:346.4px;top:355.2px;height:22.8px;line-height:22.8px;font-size:16.83px;white-space:pre;transform:translateY(0.5px) scaleY(1.12);transform-origin:0 11px"><span style="color:#d4d4d4">                  </span><span style="color:#808080">&lt;/</span><span style="color:#4ec9b0">Grid</span><span style="color:#808080">&gt;</span></div><div class="a" style="left:346.4px;top:378.0px;width:1.2px;height:23.2px;background:#404040"></div><div class="a" style="left:366.6px;top:378.0px;width:1.2px;height:23.2px;background:#404040"></div><div class="a" style="left:386.8px;top:378.0px;width:1.2px;height:23.2px;background:#404040"></div><div class="a" style="left:407.0px;top:378.0px;width:1.2px;height:23.2px;background:#404040"></div><div class="a" style="left:427.2px;top:378.0px;width:1.2px;height:23.2px;background:#404040"></div><div class="a" style="left:447.4px;top:378.0px;width:1.2px;height:23.2px;background:#404040"></div><div class="a" style="left:467.6px;top:378.0px;width:1.2px;height:23.2px;background:#404040"></div><div class="a" style="left:487.8px;top:378.0px;width:1.2px;height:23.2px;background:#404040"></div><div class="a mono" style="left:262px;top:378.0px;width:52px;text-align:right;height:22.8px;line-height:22.8px;font-size:16.8px;color:#6e7681;transform:translateY(0.5px) scaleY(1.12);transform-origin:0 11px">104</div><div class="a mono" style="left:346.4px;top:378.0px;height:22.8px;line-height:22.8px;font-size:16.83px;white-space:pre;transform:translateY(0.5px) scaleY(1.12);transform-origin:0 11px"><span style="color:#d4d4d4">                </span><span style="color:#808080">&lt;/</span><span style="color:#4ec9b0">Grid</span><span style="color:#808080">&gt;</span></div><div class="a" style="left:346.4px;top:400.8px;width:1.2px;height:23.2px;background:#404040"></div><div class="a" style="left:366.6px;top:400.8px;width:1.2px;height:23.2px;background:#404040"></div><div class="a" style="left:386.8px;top:400.8px;width:1.2px;height:23.2px;background:#404040"></div><div class="a" style="left:407.0px;top:400.8px;width:1.2px;height:23.2px;background:#404040"></div><div class="a" style="left:427.2px;top:400.8px;width:1.2px;height:23.2px;background:#404040"></div><div class="a" style="left:447.4px;top:400.8px;width:1.2px;height:23.2px;background:#404040"></div><div class="a" style="left:467.6px;top:400.8px;width:1.2px;height:23.2px;background:#404040"></div><div class="a mono" style="left:262px;top:400.8px;width:52px;text-align:right;height:22.8px;line-height:22.8px;font-size:16.8px;color:#6e7681;transform:translateY(0.5px) scaleY(1.12);transform-origin:0 11px">105</div><div class="a mono" style="left:346.4px;top:400.8px;height:22.8px;line-height:22.8px;font-size:16.83px;white-space:pre;transform:translateY(0.5px) scaleY(1.12);transform-origin:0 11px"><span style="color:#d4d4d4">              </span><span style="color:#808080">&lt;/</span><span style="color:#4ec9b0">Grid</span><span style="color:#808080">&gt;</span></div><div class="a" style="left:346.4px;top:423.6px;width:1.2px;height:23.2px;background:#404040"></div><div class="a" style="left:366.6px;top:423.6px;width:1.2px;height:23.2px;background:#404040"></div><div class="a" style="left:386.8px;top:423.6px;width:1.2px;height:23.2px;background:#404040"></div><div class="a" style="left:407.0px;top:423.6px;width:1.2px;height:23.2px;background:#404040"></div><div class="a" style="left:427.2px;top:423.6px;width:1.2px;height:23.2px;background:#404040"></div><div class="a" style="left:447.4px;top:423.6px;width:1.2px;height:23.2px;background:#404040"></div><div class="a" style="left:467.6px;top:423.6px;width:1.2px;height:23.2px;background:#404040"></div><div class="a mono" style="left:262px;top:423.6px;width:52px;text-align:right;height:22.8px;line-height:22.8px;font-size:16.8px;color:#cccccc;transform:translateY(0.5px) scaleY(1.12);transform-origin:0 11px">106</div><div class="a mono" style="left:346.4px;top:423.6px;height:22.8px;line-height:22.8px;font-size:16.83px;white-space:pre;transform:translateY(0.5px) scaleY(1.12);transform-origin:0 11px"><span style="color:#d4d4d4">              </span><span style="color:#808080">&lt;</span><span style="color:#4ec9b0">Box</span><span style="color:#d4d4d4"> </span><span style="color:#9cdcfe">width</span><span style="color:#d4d4d4">=</span><span style="color:#179fff">{</span><span style="color:#ce9178">'fit-content'</span><span style="color:#179fff">}</span><span style="color:#d4d4d4"> </span><span style="color:#9cdcfe">margin</span><span style="color:#d4d4d4">=</span><span style="color:#179fff">{</span><span style="color:#ce9178">'auto'</span><span style="color:#179fff">}</span><span style="color:#d4d4d4"> </span><span style="color:#9cdcfe">className</span><span style="color:#d4d4d4">=</span><span style="color:#ce9178">'disable_button'</span><span style="color:#808080">&gt;</span></div><div class="a" style="left:346.4px;top:446.4px;width:1.2px;height:23.2px;background:#404040"></div><div class="a" style="left:366.6px;top:446.4px;width:1.2px;height:23.2px;background:#404040"></div><div class="a" style="left:386.8px;top:446.4px;width:1.2px;height:23.2px;background:#404040"></div><div class="a" style="left:407.0px;top:446.4px;width:1.2px;height:23.2px;background:#404040"></div><div class="a" style="left:427.2px;top:446.4px;width:1.2px;height:23.2px;background:#404040"></div><div class="a" style="left:447.4px;top:446.4px;width:1.2px;height:23.2px;background:#404040"></div><div class="a" style="left:467.6px;top:446.4px;width:1.2px;height:23.2px;background:#404040"></div><div class="a" style="left:487.8px;top:446.4px;width:1.2px;height:23.2px;background:#707070"></div><div class="a mono" style="left:262px;top:446.4px;width:52px;text-align:right;height:22.8px;line-height:22.8px;font-size:16.8px;color:#6e7681;transform:translateY(0.5px) scaleY(1.12);transform-origin:0 11px">107</div><div class="a mono" style="left:346.4px;top:446.4px;height:22.8px;line-height:22.8px;font-size:16.83px;white-space:pre;transform:translateY(0.5px) scaleY(1.12);transform-origin:0 11px"><span style="color:#d4d4d4">                </span><span style="color:#808080">&lt;</span><span style="color:#4ec9b0">Button</span><span style="color:#d4d4d4"> </span><span style="color:#9cdcfe">buttonName</span><span style="color:#d4d4d4">=</span><span style="color:#179fff">{</span><span style="color:#9cdcfe">loading</span><span style="color:#d4d4d4"> ? </span><span style="color:#808080">&lt;</span><span style="color:#4ec9b0">React.Fragment</span><span style="color:#808080">&gt;</span><span style="color:#569cd6">&amp;nbsp;&amp;nbsp;&amp;nbsp;&amp;nbsp;</span><span style="color:#808080">&lt;</span><span style="color:#4ec9b0">CircularProgress</span><span style="color:#d4d4d4"> </span><span style="color:#9cdcfe">size</span><span style="color:#d4d4d4">=</span><span style="color:#ffd700">{</span><span style="color:#b5cea8">20</span><span style="color:#ffd700">}</span><span style="color:#d4d4d4"> </span><span style="color:#9cdcfe">color</span><span style="color:#d4d4d4">=</span><span style="color:#ce9178">"inherit"</span><span style="color:#d4d4d4"> </span><span style="color:#808080">/&gt;</span><span style="color:#d4d4d4"> </span><span style="color:#569cd6">&amp;nbsp;&amp;nbsp;&amp;nbsp;&amp;nbsp;&amp;nbsp;</span></div><div class="a" style="left:346.4px;top:469.2px;width:1.2px;height:23.2px;background:#404040"></div><div class="a" style="left:366.6px;top:469.2px;width:1.2px;height:23.2px;background:#404040"></div><div class="a" style="left:386.8px;top:469.2px;width:1.2px;height:23.2px;background:#404040"></div><div class="a" style="left:407.0px;top:469.2px;width:1.2px;height:23.2px;background:#404040"></div><div class="a" style="left:427.2px;top:469.2px;width:1.2px;height:23.2px;background:#404040"></div><div class="a" style="left:447.4px;top:469.2px;width:1.2px;height:23.2px;background:#404040"></div><div class="a" style="left:467.6px;top:469.2px;width:1.2px;height:23.2px;background:#404040"></div><div class="a" style="left:487.8px;top:469.2px;width:1.2px;height:23.2px;background:#707070"></div><div class="a" style="left:508.0px;top:469.2px;width:1.2px;height:23.2px;background:#404040"></div><div class="a mono" style="left:262px;top:469.2px;width:52px;text-align:right;height:22.8px;line-height:22.8px;font-size:16.8px;color:#6e7681;transform:translateY(0.5px) scaleY(1.12);transform-origin:0 11px">108</div><div class="a mono" style="left:346.4px;top:469.2px;height:22.8px;line-height:22.8px;font-size:16.83px;white-space:pre;transform:translateY(0.5px) scaleY(1.12);transform-origin:0 11px"><span style="color:#d4d4d4">                  </span><span style="color:#9cdcfe">onClick</span><span style="color:#d4d4d4">=</span><span style="color:#179fff">{</span></div><div class="a" style="left:346.4px;top:492.0px;width:1.2px;height:23.2px;background:#404040"></div><div class="a" style="left:366.6px;top:492.0px;width:1.2px;height:23.2px;background:#404040"></div><div class="a" style="left:386.8px;top:492.0px;width:1.2px;height:23.2px;background:#404040"></div><div class="a" style="left:407.0px;top:492.0px;width:1.2px;height:23.2px;background:#404040"></div><div class="a" style="left:427.2px;top:492.0px;width:1.2px;height:23.2px;background:#404040"></div><div class="a" style="left:447.4px;top:492.0px;width:1.2px;height:23.2px;background:#404040"></div><div class="a" style="left:467.6px;top:492.0px;width:1.2px;height:23.2px;background:#404040"></div><div class="a" style="left:487.8px;top:492.0px;width:1.2px;height:23.2px;background:#707070"></div><div class="a" style="left:508.0px;top:492.0px;width:1.2px;height:23.2px;background:#404040"></div><div class="a" style="left:528.2px;top:492.0px;width:1.2px;height:23.2px;background:#404040"></div><div class="a mono" style="left:262px;top:492.0px;width:52px;text-align:right;height:22.8px;line-height:22.8px;font-size:16.8px;color:#6e7681;transform:translateY(0.5px) scaleY(1.12);transform-origin:0 11px">109</div><div class="a mono" style="left:346.4px;top:492.0px;height:22.8px;line-height:22.8px;font-size:16.83px;white-space:pre;transform:translateY(0.5px) scaleY(1.12);transform-origin:0 11px"><span style="color:#d4d4d4">                    </span><span style="color:#9cdcfe">formik</span><span style="color:#d4d4d4">.</span><span style="color:#dcdcaa">handleSubmit</span></div><div class="a" style="left:346.4px;top:514.8px;width:1.2px;height:23.2px;background:#404040"></div><div class="a" style="left:366.6px;top:514.8px;width:1.2px;height:23.2px;background:#404040"></div><div class="a" style="left:386.8px;top:514.8px;width:1.2px;height:23.2px;background:#404040"></div><div class="a" style="left:407.0px;top:514.8px;width:1.2px;height:23.2px;background:#404040"></div><div class="a" style="left:427.2px;top:514.8px;width:1.2px;height:23.2px;background:#404040"></div><div class="a" style="left:447.4px;top:514.8px;width:1.2px;height:23.2px;background:#404040"></div><div class="a" style="left:467.6px;top:514.8px;width:1.2px;height:23.2px;background:#404040"></div><div class="a" style="left:487.8px;top:514.8px;width:1.2px;height:23.2px;background:#707070"></div><div class="a" style="left:508.0px;top:514.8px;width:1.2px;height:23.2px;background:#404040"></div><div class="a mono" style="left:262px;top:514.8px;width:52px;text-align:right;height:22.8px;line-height:22.8px;font-size:16.8px;color:#6e7681;transform:translateY(0.5px) scaleY(1.12);transform-origin:0 11px">110</div><div class="a mono" style="left:346.4px;top:514.8px;height:22.8px;line-height:22.8px;font-size:16.83px;white-space:pre;transform:translateY(0.5px) scaleY(1.12);transform-origin:0 11px"><span style="color:#d4d4d4">                  </span><span style="color:#179fff">}</span><span style="color:#d4d4d4"> </span><span style="color:#9cdcfe">style</span><span style="color:#d4d4d4">=</span><span style="color:#179fff">{</span><span style="color:#ffd700">{</span><span style="color:#d4d4d4"> </span><span style="color:#9cdcfe">width</span><span style="color:#d4d4d4">: </span><span style="color:#ce9178">'100%'</span><span style="color:#d4d4d4"> </span><span style="color:#ffd700">}</span><span style="color:#179fff">}</span></div><div class="a" style="left:346.4px;top:537.6px;width:1.2px;height:23.2px;background:#404040"></div><div class="a" style="left:366.6px;top:537.6px;width:1.2px;height:23.2px;background:#404040"></div><div class="a" style="left:386.8px;top:537.6px;width:1.2px;height:23.2px;background:#404040"></div><div class="a" style="left:407.0px;top:537.6px;width:1.2px;height:23.2px;background:#404040"></div><div class="a" style="left:427.2px;top:537.6px;width:1.2px;height:23.2px;background:#404040"></div><div class="a" style="left:447.4px;top:537.6px;width:1.2px;height:23.2px;background:#404040"></div><div class="a" style="left:467.6px;top:537.6px;width:1.2px;height:23.2px;background:#404040"></div><div class="a" style="left:487.8px;top:537.6px;width:1.2px;height:23.2px;background:#707070"></div><div class="a" style="left:508.0px;top:537.6px;width:1.2px;height:23.2px;background:#404040"></div><div class="a mono" style="left:262px;top:537.6px;width:52px;text-align:right;height:22.8px;line-height:22.8px;font-size:16.8px;color:#6e7681;transform:translateY(0.5px) scaleY(1.12);transform-origin:0 11px">111</div><div class="a mono" style="left:346.4px;top:537.6px;height:22.8px;line-height:22.8px;font-size:16.83px;white-space:pre;transform:translateY(0.5px) scaleY(1.12);transform-origin:0 11px"><span style="color:#d4d4d4">                  </span><span style="color:#9cdcfe">disabled</span><span style="color:#d4d4d4">=</span><span style="color:#179fff">{</span><span style="color:#9cdcfe">loading</span><span style="color:#179fff">}</span></div><div class="a" style="left:346.4px;top:560.4px;width:1.2px;height:23.2px;background:#404040"></div><div class="a" style="left:366.6px;top:560.4px;width:1.2px;height:23.2px;background:#404040"></div><div class="a" style="left:386.8px;top:560.4px;width:1.2px;height:23.2px;background:#404040"></div><div class="a" style="left:407.0px;top:560.4px;width:1.2px;height:23.2px;background:#404040"></div><div class="a" style="left:427.2px;top:560.4px;width:1.2px;height:23.2px;background:#404040"></div><div class="a" style="left:447.4px;top:560.4px;width:1.2px;height:23.2px;background:#404040"></div><div class="a" style="left:467.6px;top:560.4px;width:1.2px;height:23.2px;background:#404040"></div><div class="a" style="left:487.8px;top:560.4px;width:1.2px;height:23.2px;background:#707070"></div><div class="a mono" style="left:262px;top:560.4px;width:52px;text-align:right;height:22.8px;line-height:22.8px;font-size:16.8px;color:#6e7681;transform:translateY(0.5px) scaleY(1.12);transform-origin:0 11px">112</div><div class="a mono" style="left:346.4px;top:560.4px;height:22.8px;line-height:22.8px;font-size:16.83px;white-space:pre;transform:translateY(0.5px) scaleY(1.12);transform-origin:0 11px"><span style="color:#d4d4d4">                </span><span style="color:#808080">/&gt;</span></div><div class="a" style="left:346.4px;top:583.2px;width:1.2px;height:23.2px;background:#404040"></div><div class="a" style="left:366.6px;top:583.2px;width:1.2px;height:23.2px;background:#404040"></div><div class="a" style="left:386.8px;top:583.2px;width:1.2px;height:23.2px;background:#404040"></div><div class="a" style="left:407.0px;top:583.2px;width:1.2px;height:23.2px;background:#404040"></div><div class="a" style="left:427.2px;top:583.2px;width:1.2px;height:23.2px;background:#404040"></div><div class="a" style="left:447.4px;top:583.2px;width:1.2px;height:23.2px;background:#404040"></div><div class="a" style="left:467.6px;top:583.2px;width:1.2px;height:23.2px;background:#404040"></div><div class="a mono" style="left:262px;top:583.2px;width:52px;text-align:right;height:22.8px;line-height:22.8px;font-size:16.8px;color:#6e7681;transform:translateY(0.5px) scaleY(1.12);transform-origin:0 11px">113</div><div class="a mono" style="left:346.4px;top:583.2px;height:22.8px;line-height:22.8px;font-size:16.83px;white-space:pre;transform:translateY(0.5px) scaleY(1.12);transform-origin:0 11px"><span style="color:#d4d4d4">              </span><span style="color:#808080">&lt;/</span><span style="color:#4ec9b0">Box</span><span style="color:#808080">&gt;</span></div><div class="a" style="left:346.4px;top:606.0px;width:1.2px;height:23.2px;background:#404040"></div><div class="a" style="left:366.6px;top:606.0px;width:1.2px;height:23.2px;background:#404040"></div><div class="a" style="left:386.8px;top:606.0px;width:1.2px;height:23.2px;background:#404040"></div><div class="a" style="left:407.0px;top:606.0px;width:1.2px;height:23.2px;background:#404040"></div><div class="a" style="left:427.2px;top:606.0px;width:1.2px;height:23.2px;background:#404040"></div><div class="a" style="left:447.4px;top:606.0px;width:1.2px;height:23.2px;background:#404040"></div><div class="a mono" style="left:262px;top:606.0px;width:52px;text-align:right;height:22.8px;line-height:22.8px;font-size:16.8px;color:#6e7681;transform:translateY(0.5px) scaleY(1.12);transform-origin:0 11px">114</div><div class="a mono" style="left:346.4px;top:606.0px;height:22.8px;line-height:22.8px;font-size:16.83px;white-space:pre;transform:translateY(0.5px) scaleY(1.12);transform-origin:0 11px"><span style="color:#d4d4d4">            </span><span style="color:#808080">&lt;/</span><span style="color:#4ec9b0">Stack</span><span style="color:#808080">&gt;</span></div><div class="a" style="left:487.3px;top:424.1px;width:11.1px;height:21.8px;border:1px solid #b4b4b4;background:rgba(0,100,0,.1)"></div><div class="a" style="left:1184.2px;top:424.1px;width:11.1px;height:21.8px;border:1px solid #b4b4b4;background:rgba(0,100,0,.1)"></div><div class="a" style="left:1173.6px;top:423.6px;width:2px;height:22.8px;background:#aeafad"></div><div class="a" style="left:321px;top:423.1px;width:4.2px;height:159.6px;background:repeating-linear-gradient(-45deg,#0078d4 0 1.35px,transparent 1.35px 2.47px)"></div></div></div>
<div class="a" style="left:262px;top:130.4px;width:1521px;height:22.6px;background:#1f1f1f;box-shadow:0 1px 2px -0.3px #000"></div>
<div class="a mono" style="left:262px;top:130.2px;width:52px;text-align:right;height:22.8px;line-height:22.8px;font-size:16.8px;color:#6e7681;transform:translateY(0.5px) scaleY(1.12);transform-origin:0 11px">16</div>
<div class="a mono" style="left:346.4px;top:130.2px;height:22.8px;line-height:22.8px;font-size:16.83px;white-space:pre;transform:translateY(0.5px) scaleY(1.12);transform-origin:0 11px"><span style="color:#569cd6">const</span><span style="color:#d4d4d4"> </span><span style="color:#dcdcaa">Login</span><span style="color:#d4d4d4"> = </span><span style="color:#ffd700">()</span><span style="color:#d4d4d4"> </span><span style="color:#569cd6">=&gt;</span><span style="color:#d4d4d4"> </span><span style="color:#ffd700">{</span></div>
<div class="a" style="left:1783.8px;top:130.4px;width:1px;height:483.6px;background:#111"></div>
<div class="a" style="left:1792px;top:204.4px;width:110px;height:2px;background:#264f78;opacity:.4"></div><div class="a" style="left:1792.1px;top:130.7px;width:4.8px;height:1.6px;background:#c586c0;opacity:.5"></div><div class="a" style="left:1798.1px;top:130.7px;width:3.6px;height:1.6px;background:#c586c0;opacity:.5"></div><div class="a" style="left:1802.9px;top:130.7px;width:9.6px;height:1.6px;background:#c586c0;opacity:.5"></div><div class="a" style="left:1813.7px;top:130.7px;width:2.4px;height:1.6px;background:#ce9178;opacity:.5"></div><div class="a" style="left:1817.3px;top:130.7px;width:2.4px;height:1.6px;background:#d4d4d4;opacity:.5"></div><div class="a" style="left:1820.9px;top:130.7px;width:7.2px;height:1.6px;background:#c586c0;opacity:.5"></div><div class="a" style="left:1829.3px;top:130.7px;width:1.3px;height:1.6px;background:#9cdcfe;opacity:.5"></div><div class="a" style="left:1792.1px;top:132.7px;width:2.4px;height:1.6px;background:#c586c0;opacity:.5"></div><div class="a" style="left:1795.7px;top:132.7px;width:2.4px;height:1.6px;background:#c586c0;opacity:.5"></div><div class="a" style="left:1799.3px;top:132.7px;width:6.0px;height:1.6px;background:#c586c0;opacity:.5"></div><div class="a" style="left:1806.5px;top:132.7px;width:3.6px;height:1.6px;background:#c586c0;opacity:.5"></div><div class="a" style="left:1811.3px;top:132.7px;width:7.2px;height:1.6px;background:#c586c0;opacity:.5"></div><div class="a" style="left:1819.7px;top:132.7px;width:2.4px;height:1.6px;background:#ce9178;opacity:.5"></div><div class="a" style="left:1823.3px;top:132.7px;width:2.4px;height:1.6px;background:#9cdcfe;opacity:.5"></div><div class="a" style="left:1826.9px;top:132.7px;width:9.6px;height:1.6px;background:#ce9178;opacity:.5"></div><div class="a" style="left:1837.7px;top:132.7px;width:2.4px;height:1.6px;background:#ce9178;opacity:.5"></div><div class="a" style="left:1841.3px;top:132.7px;width:7.2px;height:1.6px;background:#c586c0;opacity:.5"></div><div class="a" style="left:1849.7px;top:132.7px;width:2.4px;height:1.6px;background:#9cdcfe;opacity:.5"></div><div class="a" style="left:1853.3px;top:132.7px;width:2.4px;height:1.6px;background:#ce9178;opacity:.5"></div><div class="a" style="left:1856.9px;top:132.7px;width:3.6px;height:1.6px;background:#d4d4d4;opacity:.5"></div><div class="a" style="left:1792.1px;top:134.7px;width:6.0px;height:1.6px;background:#c586c0;opacity:.5"></div><div class="a" style="left:1799.3px;top:134.7px;width:3.6px;height:1.6px;background:#ce9178;opacity:.5"></div><div class="a" style="left:1804.1px;top:134.7px;width:2.4px;height:1.6px;background:#ce9178;opacity:.5"></div><div class="a" style="left:1807.7px;top:134.7px;width:4.8px;height:1.6px;background:#ce9178;opacity:.5"></div><div class="a" style="left:1813.7px;top:134.7px;width:9.6px;height:1.6px;background:#9cdcfe;opacity:.5"></div><div class="a" style="left:1824.5px;top:134.7px;width:2.4px;height:1.6px;background:#ce9178;opacity:.5"></div><div class="a" style="left:1828.1px;top:134.7px;width:6.7px;height:1.6px;background:#9cdcfe;opacity:.5"></div><div class="a" style="left:1792.1px;top:136.7px;width:4.8px;height:1.6px;background:#c586c0;opacity:.5"></div><div class="a" style="left:1798.1px;top:136.7px;width:2.4px;height:1.6px;background:#ce9178;opacity:.5"></div><div class="a" style="left:1801.7px;top:136.7px;width:9.6px;height:1.6px;background:#c586c0;opacity:.5"></div><div class="a" style="left:1812.5px;top:136.7px;width:7.2px;height:1.6px;background:#c586c0;opacity:.5"></div><div class="a" style="left:1820.9px;top:136.7px;width:7.2px;height:1.6px;background:#9cdcfe;opacity:.5"></div><div class="a" style="left:1829.3px;top:136.7px;width:6.0px;height:1.6px;background:#ce9178;opacity:.5"></div><div class="a" style="left:1836.5px;top:136.7px;width:6.0px;height:1.6px;background:#d4d4d4;opacity:.5"></div><div class="a" style="left:1792.1px;top:138.7px;width:6.0px;height:1.6px;background:#c586c0;opacity:.5"></div><div class="a" style="left:1799.3px;top:138.7px;width:7.2px;height:1.6px;background:#c586c0;opacity:.5"></div><div class="a" style="left:1807.7px;top:138.7px;width:4.8px;height:1.6px;background:#d4d4d4;opacity:.5"></div><div class="a" style="left:1813.7px;top:138.7px;width:3.6px;height:1.6px;background:#9cdcfe;opacity:.5"></div><div class="a" style="left:1818.5px;top:138.7px;width:9.6px;height:1.6px;background:#9cdcfe;opacity:.5"></div><div class="a" style="left:1829.3px;top:138.7px;width:2.4px;height:1.6px;background:#ce9178;opacity:.5"></div><div class="a" style="left:1832.9px;top:138.7px;width:4.8px;height:1.6px;background:#ce9178;opacity:.5"></div><div class="a" style="left:1838.9px;top:138.7px;width:6.0px;height:1.6px;background:#d4d4d4;opacity:.5"></div><div class="a" style="left:1846.1px;top:138.7px;width:0.3px;height:1.6px;background:#c586c0;opacity:.5"></div><div class="a" style="left:1792.1px;top:140.7px;width:4.8px;height:1.6px;background:#c586c0;opacity:.5"></div><div class="a" style="left:1798.1px;top:140.7px;width:7.2px;height:1.6px;background:#c586c0;opacity:.5"></div><div class="a" style="left:1806.5px;top:140.7px;width:2.4px;height:1.6px;background:#ce9178;opacity:.5"></div><div class="a" style="left:1810.1px;top:140.7px;width:6.0px;height:1.6px;background:#9cdcfe;opacity:.5"></div><div class="a" style="left:1817.3px;top:140.7px;width:4.8px;height:1.6px;background:#9cdcfe;opacity:.5"></div><div class="a" style="left:1823.3px;top:140.7px;width:3.0px;height:1.6px;background:#c586c0;opacity:.5"></div><div class="a" style="left:1792.1px;top:142.7px;width:2.4px;height:1.6px;background:#c586c0;opacity:.5"></div><div class="a" style="left:1795.7px;top:142.7px;width:9.6px;height:1.6px;background:#c586c0;opacity:.5"></div><div class="a" style="left:1806.5px;top:142.7px;width:7.2px;height:1.6px;background:#ce9178;opacity:.5"></div><div class="a" style="left:1814.9px;top:142.7px;width:4.8px;height:1.6px;background:#d4d4d4;opacity:.5"></div><div class="a" style="left:1820.9px;top:142.7px;width:9.6px;height:1.6px;background:#d4d4d4;opacity:.5"></div><div class="a" style="left:1831.7px;top:142.7px;width:7.2px;height:1.6px;background:#c586c0;opacity:.5"></div><div class="a" style="left:1840.1px;top:142.7px;width:7.2px;height:1.6px;background:#c586c0;opacity:.5"></div><div class="a" style="left:1848.5px;top:142.7px;width:2.4px;height:1.6px;background:#c586c0;opacity:.5"></div><div class="a" style="left:1852.1px;top:142.7px;width:2.9px;height:1.6px;background:#c586c0;opacity:.5"></div><div class="a" style="left:1792.1px;top:144.7px;width:9.6px;height:1.6px;background:#c586c0;opacity:.5"></div><div class="a" style="left:1802.9px;top:144.7px;width:9.6px;height:1.6px;background:#c586c0;opacity:.5"></div><div class="a" style="left:1813.7px;top:144.7px;width:2.4px;height:1.6px;background:#d4d4d4;opacity:.5"></div><div class="a" style="left:1817.3px;top:144.7px;width:9.6px;height:1.6px;background:#ce9178;opacity:.5"></div><div class="a" style="left:1828.1px;top:144.7px;width:9.6px;height:1.6px;background:#c586c0;opacity:.5"></div><div class="a" style="left:1838.9px;top:144.7px;width:4.8px;height:1.6px;background:#c586c0;opacity:.5"></div><div class="a" style="left:1844.9px;top:144.7px;width:9.6px;height:1.6px;background:#d4d4d4;opacity:.5"></div><div class="a" style="left:1855.7px;top:144.7px;width:0.5px;height:1.6px;background:#c586c0;opacity:.5"></div><div class="a" style="left:1792.1px;top:146.7px;width:4.8px;height:1.6px;background:#c586c0;opacity:.5"></div><div class="a" style="left:1798.1px;top:146.7px;width:3.6px;height:1.6px;background:#ce9178;opacity:.5"></div><div class="a" style="left:1802.9px;top:146.7px;width:2.4px;height:1.6px;background:#c586c0;opacity:.5"></div><div class="a" style="left:1806.5px;top:146.7px;width:2.4px;height:1.6px;background:#9cdcfe;opacity:.5"></div><div class="a" style="left:1810.1px;top:146.7px;width:4.8px;height:1.6px;background:#9cdcfe;opacity:.5"></div><div class="a" style="left:1816.1px;top:146.7px;width:9.6px;height:1.6px;background:#9cdcfe;opacity:.5"></div><div class="a" style="left:1826.9px;top:146.7px;width:6.0px;height:1.6px;background:#c586c0;opacity:.5"></div><div class="a" style="left:1834.1px;top:146.7px;width:6.0px;height:1.6px;background:#c586c0;opacity:.5"></div><div class="a" style="left:1841.3px;top:146.7px;width:3.6px;height:1.6px;background:#c586c0;opacity:.5"></div><div class="a" style="left:1846.1px;top:146.7px;width:6.0px;height:1.6px;background:#ce9178;opacity:.5"></div><div class="a" style="left:1792.1px;top:148.7px;width:4.8px;height:1.6px;background:#c586c0;opacity:.5"></div><div class="a" style="left:1798.1px;top:148.7px;width:3.6px;height:1.6px;background:#c586c0;opacity:.5"></div><div class="a" style="left:1802.9px;top:148.7px;width:7.2px;height:1.6px;background:#d4d4d4;opacity:.5"></div><div class="a" style="left:1811.3px;top:148.7px;width:9.6px;height:1.6px;background:#c586c0;opacity:.5"></div><div class="a" style="left:1822.1px;top:148.7px;width:4.8px;height:1.6px;background:#c586c0;opacity:.5"></div><div class="a" style="left:1828.1px;top:148.7px;width:3.6px;height:1.6px;background:#9cdcfe;opacity:.5"></div><div class="a" style="left:1832.9px;top:148.7px;width:0.7px;height:1.6px;background:#9cdcfe;opacity:.5"></div><div class="a" style="left:1792.1px;top:150.7px;width:3.6px;height:1.6px;background:#c586c0;opacity:.5"></div><div class="a" style="left:1796.9px;top:150.7px;width:3.6px;height:1.6px;background:#9cdcfe;opacity:.5"></div><div class="a" style="left:1801.7px;top:150.7px;width:2.4px;height:1.6px;background:#c586c0;opacity:.5"></div><div class="a" style="left:1805.3px;top:150.7px;width:7.2px;height:1.6px;background:#9cdcfe;opacity:.5"></div><div class="a" style="left:1813.7px;top:150.7px;width:4.8px;height:1.6px;background:#d4d4d4;opacity:.5"></div><div class="a" style="left:1819.7px;top:150.7px;width:2.4px;height:1.6px;background:#9cdcfe;opacity:.5"></div><div class="a" style="left:1823.3px;top:150.7px;width:4.2px;height:1.6px;background:#ce9178;opacity:.5"></div><div class="a" style="left:1792.1px;top:152.7px;width:4.8px;height:1.6px;background:#c586c0;opacity:.5"></div><div class="a" style="left:1798.1px;top:152.7px;width:7.2px;height:1.6px;background:#ce9178;opacity:.5"></div><div class="a" style="left:1806.5px;top:152.7px;width:4.8px;height:1.6px;background:#9cdcfe;opacity:.5"></div><div class="a" style="left:1812.5px;top:152.7px;width:9.6px;height:1.6px;background:#ce9178;opacity:.5"></div><div class="a" style="left:1823.3px;top:152.7px;width:7.2px;height:1.6px;background:#c586c0;opacity:.5"></div><div class="a" style="left:1831.7px;top:152.7px;width:6.0px;height:1.6px;background:#ce9178;opacity:.5"></div><div class="a" style="left:1838.9px;top:152.7px;width:2.7px;height:1.6px;background:#c586c0;opacity:.5"></div><div class="a" style="left:1792.1px;top:154.7px;width:6.0px;height:1.6px;background:#c586c0;opacity:.5"></div><div class="a" style="left:1799.3px;top:154.7px;width:6.0px;height:1.6px;background:#c586c0;opacity:.5"></div><div class="a" style="left:1806.5px;top:154.7px;width:6.0px;height:1.6px;background:#c586c0;opacity:.5"></div><div class="a" style="left:1813.7px;top:154.7px;width:2.4px;height:1.6px;background:#9cdcfe;opacity:.5"></div><div class="a" style="left:1817.3px;top:154.7px;width:2.4px;height:1.6px;background:#9cdcfe;opacity:.5"></div><div class="a" style="left:1820.9px;top:154.7px;width:6.0px;height:1.6px;background:#9cdcfe;opacity:.5"></div><div class="a" style="left:1828.1px;top:154.7px;width:2.4px;height:1.6px;background:#d4d4d4;opacity:.5"></div><div class="a" style="left:1831.7px;top:154.7px;width:7.2px;height:1.6px;background:#c586c0;opacity:.5"></div><div class="a" style="left:1840.1px;top:154.7px;width:2.4px;height:1.6px;background:#c586c0;opacity:.5"></div><div class="a" style="left:1843.7px;top:154.7px;width:7.2px;height:1.6px;background:#9cdcfe;opacity:.5"></div><div class="a" style="left:1852.1px;top:154.7px;width:1.7px;height:1.6px;background:#c586c0;opacity:.5"></div><div class="a" style="left:1792.1px;top:160.7px;width:4.8px;height:1.6px;background:#569cd6;opacity:.5"></div><div class="a" style="left:1798.1px;top:160.7px;width:7.2px;height:1.6px;background:#569cd6;opacity:.5"></div><div class="a" style="left:1806.5px;top:160.7px;width:2.4px;height:1.6px;background:#dcdcaa;opacity:.5"></div><div class="a" style="left:1810.1px;top:160.7px;width:2.1px;height:1.6px;background:#9cdcfe;opacity:.5"></div><div class="a" style="left:1793.9px;top:162.7px;width:3.6px;height:1.6px;background:#9cdcfe;opacity:.5"></div><div class="a" style="left:1798.7px;top:162.7px;width:9.6px;height:1.6px;background:#dcdcaa;opacity:.5"></div><div class="a" style="left:1809.5px;top:162.7px;width:4.8px;height:1.6px;background:#dcdcaa;opacity:.5"></div><div class="a" style="left:1815.5px;top:162.7px;width:6.0px;height:1.6px;background:#9cdcfe;opacity:.5"></div><div class="a" style="left:1822.7px;top:162.7px;width:1.7px;height:1.6px;background:#569cd6;opacity:.5"></div><div class="a" style="left:1793.9px;top:164.7px;width:6.0px;height:1.6px;background:#9cdcfe;opacity:.5"></div><div class="a" style="left:1801.1px;top:164.7px;width:6.0px;height:1.6px;background:#569cd6;opacity:.5"></div><div class="a" style="left:1808.3px;top:164.7px;width:4.8px;height:1.6px;background:#9cdcfe;opacity:.5"></div><div class="a" style="left:1814.3px;top:164.7px;width:3.6px;height:1.6px;background:#9cdcfe;opacity:.5"></div><div class="a" style="left:1819.1px;top:164.7px;width:9.6px;height:1.6px;background:#dcdcaa;opacity:.5"></div><div class="a" style="left:1829.9px;top:164.7px;width:9.6px;height:1.6px;background:#dcdcaa;opacity:.5"></div><div class="a" style="left:1793.9px;top:166.7px;width:6.0px;height:1.6px;background:#9cdcfe;opacity:.5"></div><div class="a" style="left:1801.1px;top:166.7px;width:9.6px;height:1.6px;background:#d4d4d4;opacity:.5"></div><div class="a" style="left:1811.9px;top:166.7px;width:7.2px;height:1.6px;background:#9cdcfe;opacity:.5"></div><div class="a" style="left:1820.3px;top:166.7px;width:3.6px;height:1.6px;background:#dcdcaa;opacity:.5"></div><div class="a" style="left:1793.9px;top:168.7px;width:3.6px;height:1.6px;background:#9cdcfe;opacity:.5"></div><div class="a" style="left:1798.7px;top:168.7px;width:9.6px;height:1.6px;background:#9cdcfe;opacity:.5"></div><div class="a" style="left:1809.5px;top:168.7px;width:7.2px;height:1.6px;background:#dcdcaa;opacity:.5"></div><div class="a" style="left:1817.9px;top:168.7px;width:5.9px;height:1.6px;background:#9cdcfe;opacity:.5"></div><div class="a" style="left:1793.9px;top:174.7px;width:9.6px;height:1.6px;background:#569cd6;opacity:.5"></div><div class="a" style="left:1804.7px;top:174.7px;width:4.8px;height:1.6px;background:#d4d4d4;opacity:.5"></div><div class="a" style="left:1810.7px;top:174.7px;width:3.6px;height:1.6px;background:#d4d4d4;opacity:.5"></div><div class="a" style="left:1815.5px;top:174.7px;width:3.6px;height:1.6px;background:#d4d4d4;opacity:.5"></div><div class="a" style="left:1796.0px;top:176.7px;width:9.6px;height:1.6px;background:#9cdcfe;opacity:.5"></div><div class="a" style="left:1806.8px;top:176.7px;width:3.6px;height:1.6px;background:#d4d4d4;opacity:.5"></div><div class="a" style="left:1811.6px;top:176.7px;width:3.6px;height:1.6px;background:#569cd6;opacity:.5"></div><div class="a" style="left:1816.4px;top:176.7px;width:9.6px;height:1.6px;background:#d4d4d4;opacity:.5"></div><div class="a" style="left:1827.2px;top:176.7px;width:2.7px;height:1.6px;background:#569cd6;opacity:.5"></div><div class="a" style="left:1796.0px;top:178.7px;width:4.8px;height:1.6px;background:#9cdcfe;opacity:.5"></div><div class="a" style="left:1802.0px;top:178.7px;width:9.6px;height:1.6px;background:#9cdcfe;opacity:.5"></div><div class="a" style="left:1812.8px;top:178.7px;width:2.4px;height:1.6px;background:#dcdcaa;opacity:.5"></div><div class="a" style="left:1816.4px;top:178.7px;width:6.0px;height:1.6px;background:#dcdcaa;opacity:.5"></div><div class="a" style="left:1823.6px;top:178.7px;width:0.2px;height:1.6px;background:#dcdcaa;opacity:.5"></div><div class="a" style="left:1798.2px;top:180.7px;width:6.0px;height:1.6px;background:#9cdcfe;opacity:.5"></div><div class="a" style="left:1805.4px;top:180.7px;width:9.3px;height:1.6px;background:#dcdcaa;opacity:.5"></div><div class="a" style="left:1798.2px;top:184.7px;width:4.8px;height:1.6px;background:#6a9955;opacity:.5"></div><div class="a" style="left:1804.2px;top:184.7px;width:2.4px;height:1.6px;background:#6a9955;opacity:.5"></div><div class="a" style="left:1807.8px;top:184.7px;width:2.4px;height:1.6px;background:#6a9955;opacity:.5"></div><div class="a" style="left:1811.4px;top:184.7px;width:6.0px;height:1.6px;background:#6a9955;opacity:.5"></div><div class="a" style="left:1818.6px;top:184.7px;width:0.4px;height:1.6px;background:#6a9955;opacity:.5"></div><div class="a" style="left:1798.2px;top:186.7px;width:6.0px;height:1.6px;background:#6a9955;opacity:.5"></div><div class="a" style="left:1805.4px;top:186.7px;width:7.2px;height:1.6px;background:#6a9955;opacity:.5"></div><div class="a" style="left:1813.8px;top:186.7px;width:6.0px;height:1.6px;background:#6a9955;opacity:.5"></div><div class="a" style="left:1798.2px;top:188.7px;width:9.6px;height:1.6px;background:#6a9955;opacity:.5"></div><div class="a" style="left:1809.0px;top:188.7px;width:0.8px;height:1.6px;background:#6a9955;opacity:.5"></div><div class="a" style="left:1798.2px;top:192.7px;width:6.0px;height:1.6px;background:#569cd6;opacity:.5"></div><div class="a" style="left:1805.4px;top:192.7px;width:9.6px;height:1.6px;background:#dcdcaa;opacity:.5"></div><div class="a" style="left:1800.0px;top:194.7px;width:6.0px;height:1.6px;background:#9cdcfe;opacity:.5"></div><div class="a" style="left:1807.2px;top:194.7px;width:3.6px;height:1.6px;background:#569cd6;opacity:.5"></div><div class="a" style="left:1812.0px;top:194.7px;width:5.7px;height:1.6px;background:#dcdcaa;opacity:.5"></div><div class="a" style="left:1800.0px;top:196.7px;width:2.4px;height:1.6px;background:#9cdcfe;opacity:.5"></div><div class="a" style="left:1803.6px;top:196.7px;width:9.6px;height:1.6px;background:#569cd6;opacity:.5"></div><div class="a" style="left:1814.4px;top:196.7px;width:6.0px;height:1.6px;background:#569cd6;opacity:.5"></div><div class="a" style="left:1821.6px;top:196.7px;width:3.4px;height:1.6px;background:#9cdcfe;opacity:.5"></div><div class="a" style="left:1798.2px;top:198.7px;width:1.8px;height:1.6px;background:#9cdcfe;opacity:.5"></div><div class="a" style="left:1798.2px;top:202.7px;width:3.6px;height:1.6px;background:#569cd6;opacity:.5"></div><div class="a" style="left:1803.0px;top:202.7px;width:3.6px;height:1.6px;background:#dcdcaa;opacity:.5"></div><div class="a" style="left:1807.8px;top:202.7px;width:2.4px;height:1.6px;background:#dcdcaa;opacity:.5"></div><div class="a" style="left:1811.4px;top:202.7px;width:7.2px;height:1.6px;background:#9cdcfe;opacity:.5"></div><div class="a" style="left:1819.8px;top:202.7px;width:9.6px;height:1.6px;background:#dcdcaa;opacity:.5"></div><div class="a" style="left:1792.1px;top:204.7px;width:7.2px;height:1.6px;background:#9cdcfe;opacity:.5"></div><div class="a" style="left:1800.5px;top:204.7px;width:7.2px;height:1.6px;background:#569cd6;opacity:.5"></div><div class="a" style="left:1808.9px;top:204.7px;width:6.4px;height:1.6px;background:#dcdcaa;opacity:.5"></div><div class="a" style="left:1798.2px;top:206.7px;width:3.6px;height:1.6px;background:#569cd6;opacity:.5"></div><div class="a" style="left:1803.0px;top:206.7px;width:3.1px;height:1.6px;background:#dcdcaa;opacity:.5"></div><div class="a" style="left:1800.0px;top:208.7px;width:2.4px;height:1.6px;background:#6a9955;opacity:.5"></div><div class="a" style="left:1803.6px;top:208.7px;width:2.4px;height:1.6px;background:#6a9955;opacity:.5"></div><div class="a" style="left:1807.2px;top:208.7px;width:7.2px;height:1.6px;background:#6a9955;opacity:.5"></div><div class="a" style="left:1815.6px;top:208.7px;width:5.2px;height:1.6px;background:#6a9955;opacity:.5"></div><div class="a" style="left:1800.0px;top:212.7px;width:3.6px;height:1.6px;background:#6a9955;opacity:.5"></div><div class="a" style="left:1804.8px;top:212.7px;width:2.4px;height:1.6px;background:#6a9955;opacity:.5"></div><div class="a" style="left:1808.4px;top:212.7px;width:3.2px;height:1.6px;background:#6a9955;opacity:.5"></div><div class="a" style="left:1800.0px;top:214.7px;width:7.2px;height:1.6px;background:#6a9955;opacity:.5"></div><div class="a" style="left:1808.4px;top:214.7px;width:3.6px;height:1.6px;background:#6a9955;opacity:.5"></div><div class="a" style="left:1813.2px;top:214.7px;width:2.1px;height:1.6px;background:#6a9955;opacity:.5"></div><div class="a" style="left:1800.0px;top:216.7px;width:3.6px;height:1.6px;background:#6a9955;opacity:.5"></div><div class="a" style="left:1804.8px;top:216.7px;width:2.4px;height:1.6px;background:#6a9955;opacity:.5"></div><div class="a" style="left:1808.4px;top:216.7px;width:6.0px;height:1.6px;background:#6a9955;opacity:.5"></div><div class="a" style="left:1815.6px;top:216.7px;width:2.1px;height:1.6px;background:#6a9955;opacity:.5"></div><div class="a" style="left:1800.0px;top:218.7px;width:7.2px;height:1.6px;background:#6a9955;opacity:.5"></div><div class="a" style="left:1808.4px;top:218.7px;width:3.6px;height:1.6px;background:#6a9955;opacity:.5"></div><div class="a" style="left:1813.2px;top:218.7px;width:6.0px;height:1.6px;background:#6a9955;opacity:.5"></div><div class="a" style="left:1820.4px;top:218.7px;width:7.2px;height:1.6px;background:#6a9955;opacity:.5"></div><div class="a" style="left:1828.8px;top:218.7px;width:3.6px;height:1.6px;background:#6a9955;opacity:.5"></div><div class="a" style="left:1833.6px;top:218.7px;width:3.6px;height:1.6px;background:#6a9955;opacity:.5"></div><div class="a" style="left:1838.4px;top:218.7px;width:7.2px;height:1.6px;background:#6a9955;opacity:.5"></div><div class="a" style="left:1846.8px;top:218.7px;width:3.9px;height:1.6px;background:#6a9955;opacity:.5"></div><div class="a" style="left:1800.0px;top:220.7px;width:4.3px;height:1.6px;background:#6a9955;opacity:.5"></div><div class="a" style="left:1798.2px;top:222.7px;width:1.2px;height:1.6px;background:#9cdcfe;opacity:.5"></div><div class="a" style="left:1796.0px;top:224.7px;width:1.2px;height:1.6px;background:#9cdcfe;opacity:.5"></div><div class="a" style="left:1796.0px;top:226.7px;width:7.2px;height:1.6px;background:#9cdcfe;opacity:.5"></div><div class="a" style="left:1804.4px;top:226.7px;width:7.2px;height:1.6px;background:#569cd6;opacity:.5"></div><div class="a" style="left:1812.8px;top:226.7px;width:2.4px;height:1.6px;background:#9cdcfe;opacity:.5"></div><div class="a" style="left:1816.4px;top:226.7px;width:3.6px;height:1.6px;background:#d4d4d4;opacity:.5"></div><div class="a" style="left:1821.2px;top:226.7px;width:4.8px;height:1.6px;background:#9cdcfe;opacity:.5"></div><div class="a" style="left:1827.2px;top:226.7px;width:2.4px;height:1.6px;background:#569cd6;opacity:.5"></div><div class="a" style="left:1830.8px;top:226.7px;width:4.6px;height:1.6px;background:#9cdcfe;opacity:.5"></div><div class="a" style="left:1793.9px;top:228.7px;width:2.4px;height:1.6px;background:#9cdcfe;opacity:.5"></div><div class="a" style="left:1794.2px;top:232.7px;width:6.0px;height:1.6px;background:#c586c0;opacity:.5"></div><div class="a" style="left:1801.4px;top:232.7px;width:0.7px;height:1.6px;background:#ce9178;opacity:.5"></div><div class="a" style="left:1796.8px;top:234.7px;width:7.2px;height:1.6px;background:#4ec9b0;opacity:.5"></div><div class="a" style="left:1805.2px;top:234.7px;width:7.2px;height:1.6px;background:#569cd6;opacity:.5"></div><div class="a" style="left:1813.6px;top:234.7px;width:3.6px;height:1.6px;background:#ce9178;opacity:.5"></div><div class="a" style="left:1818.4px;top:234.7px;width:6.0px;height:1.6px;background:#569cd6;opacity:.5"></div><div class="a" style="left:1825.6px;top:234.7px;width:7.2px;height:1.6px;background:#d4d4d4;opacity:.5"></div><div class="a" style="left:1834.0px;top:234.7px;width:7.2px;height:1.6px;background:#9cdcfe;opacity:.5"></div><div class="a" style="left:1842.4px;top:234.7px;width:9.6px;height:1.6px;background:#569cd6;opacity:.5"></div><div class="a" style="left:1853.2px;top:234.7px;width:4.8px;height:1.6px;background:#569cd6;opacity:.5"></div><div class="a" style="left:1859.2px;top:234.7px;width:3.6px;height:1.6px;background:#d4d4d4;opacity:.5"></div><div class="a" style="left:1864.0px;top:234.7px;width:3.6px;height:1.6px;background:#d4d4d4;opacity:.5"></div><div class="a" style="left:1868.8px;top:234.7px;width:2.4px;height:1.6px;background:#d4d4d4;opacity:.5"></div><div class="a" style="left:1872.4px;top:234.7px;width:6.0px;height:1.6px;background:#ce9178;opacity:.5"></div><div class="a" style="left:1879.6px;top:234.7px;width:2.4px;height:1.6px;background:#9cdcfe;opacity:.5"></div><div class="a" style="left:1883.2px;top:234.7px;width:6.0px;height:1.6px;background:#4ec9b0;opacity:.5"></div><div class="a" style="left:1890.4px;top:234.7px;width:3.6px;height:1.6px;background:#ce9178;opacity:.5"></div><div class="a" style="left:1895.2px;top:234.7px;width:2.4px;height:1.6px;background:#9cdcfe;opacity:.5"></div><div class="a" style="left:1898.8px;top:234.7px;width:3.2px;height:1.6px;background:#ce9178;opacity:.5"></div><div class="a" style="left:1798.8px;top:236.7px;width:3.6px;height:1.6px;background:#4ec9b0;opacity:.5"></div><div class="a" style="left:1803.6px;top:236.7px;width:4.8px;height:1.6px;background:#9cdcfe;opacity:.5"></div><div class="a" style="left:1809.6px;top:236.7px;width:6.0px;height:1.6px;background:#9cdcfe;opacity:.5"></div><div class="a" style="left:1816.8px;top:236.7px;width:9.6px;height:1.6px;background:#4ec9b0;opacity:.5"></div><div class="a" style="left:1827.6px;top:236.7px;width:6.0px;height:1.6px;background:#d4d4d4;opacity:.5"></div><div class="a" style="left:1834.8px;top:236.7px;width:3.6px;height:1.6px;background:#9cdcfe;opacity:.5"></div><div class="a" style="left:1839.6px;top:236.7px;width:3.6px;height:1.6px;background:#d4d4d4;opacity:.5"></div><div class="a" style="left:1844.4px;top:236.7px;width:7.2px;height:1.6px;background:#d4d4d4;opacity:.5"></div><div class="a" style="left:1852.8px;top:236.7px;width:4.8px;height:1.6px;background:#d4d4d4;opacity:.5"></div><div class="a" style="left:1858.8px;top:236.7px;width:0.8px;height:1.6px;background:#ce9178;opacity:.5"></div><div class="a" style="left:1801.5px;top:238.7px;width:4.8px;height:1.6px;background:#4ec9b0;opacity:.5"></div><div class="a" style="left:1807.5px;top:238.7px;width:2.4px;height:1.6px;background:#ce9178;opacity:.5"></div><div class="a" style="left:1811.1px;top:238.7px;width:2.4px;height:1.6px;background:#ce9178;opacity:.5"></div><div class="a" style="left:1814.7px;top:238.7px;width:7.2px;height:1.6px;background:#d4d4d4;opacity:.5"></div><div class="a" style="left:1823.1px;top:238.7px;width:4.9px;height:1.6px;background:#4ec9b0;opacity:.5"></div><div class="a" style="left:1798.8px;top:240.7px;width:4.0px;height:1.6px;background:#4ec9b0;opacity:.5"></div><div class="a" style="left:1798.8px;top:242.7px;width:4.8px;height:1.6px;background:#4ec9b0;opacity:.5"></div><div class="a" style="left:1804.8px;top:242.7px;width:7.2px;height:1.6px;background:#569cd6;opacity:.5"></div><div class="a" style="left:1813.2px;top:242.7px;width:4.8px;height:1.6px;background:#569cd6;opacity:.5"></div><div class="a" style="left:1819.2px;top:242.7px;width:2.4px;height:1.6px;background:#4ec9b0;opacity:.5"></div><div class="a" style="left:1822.8px;top:242.7px;width:3.6px;height:1.6px;background:#4ec9b0;opacity:.5"></div><div class="a" style="left:1827.6px;top:242.7px;width:2.4px;height:1.6px;background:#ce9178;opacity:.5"></div><div class="a" style="left:1831.2px;top:242.7px;width:4.8px;height:1.6px;background:#4ec9b0;opacity:.5"></div><div class="a" style="left:1837.2px;top:242.7px;width:3.6px;height:1.6px;background:#ce9178;opacity:.5"></div><div class="a" style="left:1842.0px;top:242.7px;width:3.6px;height:1.6px;background:#d4d4d4;opacity:.5"></div><div class="a" style="left:1846.8px;top:242.7px;width:9.6px;height:1.6px;background:#ce9178;opacity:.5"></div><div class="a" style="left:1857.6px;top:242.7px;width:6.0px;height:1.6px;background:#9cdcfe;opacity:.5"></div><div class="a" style="left:1864.8px;top:242.7px;width:7.2px;height:1.6px;background:#569cd6;opacity:.5"></div><div class="a" style="left:1873.2px;top:242.7px;width:7.2px;height:1.6px;background:#d4d4d4;opacity:.5"></div><div class="a" style="left:1881.6px;top:242.7px;width:9.6px;height:1.6px;background:#ce9178;opacity:.5"></div><div class="a" style="left:1892.4px;top:242.7px;width:2.4px;height:1.6px;background:#ce9178;opacity:.5"></div><div class="a" style="left:1896.0px;top:242.7px;width:2.4px;height:1.6px;background:#9cdcfe;opacity:.5"></div><div class="a" style="left:1899.6px;top:242.7px;width:2.4px;height:1.6px;background:#4ec9b0;opacity:.5"></div><div class="a" style="left:1800.8px;top:246.7px;width:4.8px;height:1.6px;background:#4ec9b0;opacity:.5"></div><div class="a" style="left:1806.8px;top:246.7px;width:2.4px;height:1.6px;background:#4ec9b0;opacity:.5"></div><div class="a" style="left:1810.4px;top:246.7px;width:4.8px;height:1.6px;background:#4ec9b0;opacity:.5"></div><div class="a" style="left:1816.4px;top:246.7px;width:7.2px;height:1.6px;background:#9cdcfe;opacity:.5"></div><div class="a" style="left:1824.8px;top:246.7px;width:2.4px;height:1.6px;background:#ce9178;opacity:.5"></div><div class="a" style="left:1828.4px;top:246.7px;width:2.4px;height:1.6px;background:#d4d4d4;opacity:.5"></div><div class="a" style="left:1832.0px;top:246.7px;width:2.4px;height:1.6px;background:#ce9178;opacity:.5"></div><div class="a" style="left:1835.6px;top:246.7px;width:7.2px;height:1.6px;background:#d4d4d4;opacity:.5"></div><div class="a" style="left:1844.0px;top:246.7px;width:4.8px;height:1.6px;background:#569cd6;opacity:.5"></div><div class="a" style="left:1850.0px;top:246.7px;width:3.6px;height:1.6px;background:#4ec9b0;opacity:.5"></div><div class="a" style="left:1854.8px;top:246.7px;width:7.2px;height:1.6px;background:#9cdcfe;opacity:.5"></div><div class="a" style="left:1863.2px;top:246.7px;width:2.4px;height:1.6px;background:#9cdcfe;opacity:.5"></div><div class="a" style="left:1866.8px;top:246.7px;width:4.8px;height:1.6px;background:#4ec9b0;opacity:.5"></div><div class="a" style="left:1872.8px;top:246.7px;width:3.6px;height:1.6px;background:#9cdcfe;opacity:.5"></div><div class="a" style="left:1877.6px;top:246.7px;width:4.8px;height:1.6px;background:#ce9178;opacity:.5"></div><div class="a" style="left:1883.6px;top:246.7px;width:7.2px;height:1.6px;background:#9cdcfe;opacity:.5"></div><div class="a" style="left:1892.0px;top:246.7px;width:4.8px;height:1.6px;background:#d4d4d4;opacity:.5"></div><div class="a" style="left:1898.0px;top:246.7px;width:4.0px;height:1.6px;background:#9cdcfe;opacity:.5"></div><div class="a" style="left:1802.8px;top:248.7px;width:4.8px;height:1.6px;background:#4ec9b0;opacity:.5"></div><div class="a" style="left:1808.8px;top:248.7px;width:4.8px;height:1.6px;background:#4ec9b0;opacity:.5"></div><div class="a" style="left:1814.8px;top:248.7px;width:4.8px;height:1.6px;background:#4ec9b0;opacity:.5"></div><div class="a" style="left:1820.8px;top:248.7px;width:2.4px;height:1.6px;background:#4ec9b0;opacity:.5"></div><div class="a" style="left:1824.4px;top:248.7px;width:9.6px;height:1.6px;background:#569cd6;opacity:.5"></div><div class="a" style="left:1835.2px;top:248.7px;width:7.2px;height:1.6px;background:#9cdcfe;opacity:.5"></div><div class="a" style="left:1843.6px;top:248.7px;width:7.2px;height:1.6px;background:#d4d4d4;opacity:.5"></div><div class="a" style="left:1852.0px;top:248.7px;width:3.6px;height:1.6px;background:#d4d4d4;opacity:.5"></div><div class="a" style="left:1856.8px;top:248.7px;width:0.2px;height:1.6px;background:#d4d4d4;opacity:.5"></div><div class="a" style="left:1804.8px;top:250.7px;width:3.3px;height:1.6px;background:#4ec9b0;opacity:.5"></div><div class="a" style="left:1806.7px;top:252.7px;width:6.0px;height:1.6px;background:#4ec9b0;opacity:.5"></div><div class="a" style="left:1813.9px;top:252.7px;width:7.2px;height:1.6px;background:#d4d4d4;opacity:.5"></div><div class="a" style="left:1822.3px;top:252.7px;width:7.2px;height:1.6px;background:#ce9178;opacity:.5"></div><div class="a" style="left:1830.7px;top:252.7px;width:9.6px;height:1.6px;background:#9cdcfe;opacity:.5"></div><div class="a" style="left:1841.5px;top:252.7px;width:3.6px;height:1.6px;background:#ce9178;opacity:.5"></div><div class="a" style="left:1846.3px;top:252.7px;width:3.6px;height:1.6px;background:#9cdcfe;opacity:.5"></div><div class="a" style="left:1851.1px;top:252.7px;width:6.0px;height:1.6px;background:#ce9178;opacity:.5"></div><div class="a" style="left:1858.3px;top:252.7px;width:2.4px;height:1.6px;background:#9cdcfe;opacity:.5"></div><div class="a" style="left:1861.9px;top:252.7px;width:2.4px;height:1.6px;background:#4ec9b0;opacity:.5"></div><div class="a" style="left:1865.5px;top:252.7px;width:9.6px;height:1.6px;background:#ce9178;opacity:.5"></div><div class="a" style="left:1876.3px;top:252.7px;width:6.0px;height:1.6px;background:#9cdcfe;opacity:.5"></div><div class="a" style="left:1883.5px;top:252.7px;width:2.4px;height:1.6px;background:#4ec9b0;opacity:.5"></div><div class="a" style="left:1887.1px;top:252.7px;width:9.6px;height:1.6px;background:#d4d4d4;opacity:.5"></div><div class="a" style="left:1897.9px;top:252.7px;width:4.0px;height:1.6px;background:#ce9178;opacity:.5"></div><div class="a" style="left:1806.7px;top:254.7px;width:7.2px;height:1.6px;background:#4ec9b0;opacity:.5"></div><div class="a" style="left:1815.1px;top:254.7px;width:3.6px;height:1.6px;background:#ce9178;opacity:.5"></div><div class="a" style="left:1819.9px;top:254.7px;width:2.4px;height:1.6px;background:#d4d4d4;opacity:.5"></div><div class="a" style="left:1823.5px;top:254.7px;width:3.6px;height:1.6px;background:#9cdcfe;opacity:.5"></div><div class="a" style="left:1828.3px;top:254.7px;width:4.8px;height:1.6px;background:#d4d4d4;opacity:.5"></div><div class="a" style="left:1834.3px;top:254.7px;width:2.4px;height:1.6px;background:#ce9178;opacity:.5"></div><div class="a" style="left:1837.9px;top:254.7px;width:4.8px;height:1.6px;background:#ce9178;opacity:.5"></div><div class="a" style="left:1843.9px;top:254.7px;width:7.2px;height:1.6px;background:#ce9178;opacity:.5"></div><div class="a" style="left:1852.3px;top:254.7px;width:3.6px;height:1.6px;background:#4ec9b0;opacity:.5"></div><div class="a" style="left:1857.1px;top:254.7px;width:4.8px;height:1.6px;background:#9cdcfe;opacity:.5"></div><div class="a" style="left:1863.1px;top:254.7px;width:4.8px;height:1.6px;background:#9cdcfe;opacity:.5"></div><div class="a" style="left:1869.1px;top:254.7px;width:2.4px;height:1.6px;background:#ce9178;opacity:.5"></div><div class="a" style="left:1872.7px;top:254.7px;width:6.0px;height:1.6px;background:#4ec9b0;opacity:.5"></div><div class="a" style="left:1879.9px;top:254.7px;width:6.0px;height:1.6px;background:#ce9178;opacity:.5"></div><div class="a" style="left:1887.1px;top:254.7px;width:7.2px;height:1.6px;background:#9cdcfe;opacity:.5"></div><div class="a" style="left:1895.5px;top:254.7px;width:3.6px;height:1.6px;background:#569cd6;opacity:.5"></div><div class="a" style="left:1900.3px;top:254.7px;width:1.6px;height:1.6px;background:#4ec9b0;opacity:.5"></div><div class="a" style="left:1804.8px;top:256.7px;width:3.3px;height:1.6px;background:#4ec9b0;opacity:.5"></div><div class="a" style="left:1804.8px;top:258.7px;width:2.4px;height:1.6px;background:#4ec9b0;opacity:.5"></div><div class="a" style="left:1808.4px;top:258.7px;width:3.6px;height:1.6px;background:#d4d4d4;opacity:.5"></div><div class="a" style="left:1813.2px;top:258.7px;width:7.2px;height:1.6px;background:#4ec9b0;opacity:.5"></div><div class="a" style="left:1821.6px;top:258.7px;width:6.0px;height:1.6px;background:#4ec9b0;opacity:.5"></div><div class="a" style="left:1828.8px;top:258.7px;width:4.4px;height:1.6px;background:#ce9178;opacity:.5"></div><div class="a" style="left:1806.7px;top:260.7px;width:9.6px;height:1.6px;background:#4ec9b0;opacity:.5"></div><div class="a" style="left:1817.5px;top:260.7px;width:3.6px;height:1.6px;background:#4ec9b0;opacity:.5"></div><div class="a" style="left:1822.3px;top:260.7px;width:7.2px;height:1.6px;background:#569cd6;opacity:.5"></div><div class="a" style="left:1830.7px;top:260.7px;width:3.6px;height:1.6px;background:#569cd6;opacity:.5"></div><div class="a" style="left:1835.5px;top:260.7px;width:6.0px;height:1.6px;background:#ce9178;opacity:.5"></div><div class="a" style="left:1842.7px;top:260.7px;width:1.7px;height:1.6px;background:#d4d4d4;opacity:.5"></div><div class="a" style="left:1808.7px;top:262.7px;width:3.6px;height:1.6px;background:#4ec9b0;opacity:.5"></div><div class="a" style="left:1813.5px;top:262.7px;width:4.8px;height:1.6px;background:#569cd6;opacity:.5"></div><div class="a" style="left:1819.5px;top:262.7px;width:0.4px;height:1.6px;background:#9cdcfe;opacity:.5"></div><div class="a" style="left:1808.7px;top:264.7px;width:2.4px;height:1.6px;background:#4ec9b0;opacity:.5"></div><div class="a" style="left:1812.3px;top:264.7px;width:9.0px;height:1.6px;background:#569cd6;opacity:.5"></div><div class="a" style="left:1806.7px;top:266.7px;width:9.6px;height:1.6px;background:#4ec9b0;opacity:.5"></div><div class="a" style="left:1817.5px;top:266.7px;width:6.0px;height:1.6px;background:#569cd6;opacity:.5"></div><div class="a" style="left:1824.7px;top:266.7px;width:3.6px;height:1.6px;background:#569cd6;opacity:.5"></div><div class="a" style="left:1829.5px;top:266.7px;width:7.2px;height:1.6px;background:#569cd6;opacity:.5"></div><div class="a" style="left:1837.9px;top:266.7px;width:2.4px;height:1.6px;background:#569cd6;opacity:.5"></div><div class="a" style="left:1841.5px;top:266.7px;width:8.9px;height:1.6px;background:#9cdcfe;opacity:.5"></div><div class="a" style="left:1808.7px;top:268.7px;width:2.4px;height:1.6px;background:#4ec9b0;opacity:.5"></div><div class="a" style="left:1812.3px;top:268.7px;width:2.4px;height:1.6px;background:#4ec9b0;opacity:.5"></div><div class="a" style="left:1815.9px;top:268.7px;width:3.6px;height:1.6px;background:#ce9178;opacity:.5"></div><div class="a" style="left:1808.7px;top:270.7px;width:2.4px;height:1.6px;background:#4ec9b0;opacity:.5"></div><div class="a" style="left:1812.3px;top:270.7px;width:6.0px;height:1.6px;background:#d4d4d4;opacity:.5"></div><div class="a" style="left:1819.5px;top:270.7px;width:1.1px;height:1.6px;background:#4ec9b0;opacity:.5"></div><div class="a" style="left:1808.7px;top:272.7px;width:9.6px;height:1.6px;background:#4ec9b0;opacity:.5"></div><div class="a" style="left:1819.5px;top:272.7px;width:2.4px;height:1.6px;background:#569cd6;opacity:.5"></div><div class="a" style="left:1823.1px;top:272.7px;width:0.8px;height:1.6px;background:#9cdcfe;opacity:.5"></div><div class="a" style="left:1806.7px;top:274.7px;width:6.0px;height:1.6px;background:#4ec9b0;opacity:.5"></div><div class="a" style="left:1813.9px;top:274.7px;width:4.8px;height:1.6px;background:#4ec9b0;opacity:.5"></div><div class="a" style="left:1819.9px;top:274.7px;width:6.0px;height:1.6px;background:#4ec9b0;opacity:.5"></div><div class="a" style="left:1827.1px;top:274.7px;width:9.6px;height:1.6px;background:#569cd6;opacity:.5"></div><div class="a" style="left:1837.9px;top:274.7px;width:7.2px;height:1.6px;background:#4ec9b0;opacity:.5"></div><div class="a" style="left:1846.3px;top:274.7px;width:9.6px;height:1.6px;background:#569cd6;opacity:.5"></div><div class="a" style="left:1857.1px;top:274.7px;width:2.4px;height:1.6px;background:#d4d4d4;opacity:.5"></div><div class="a" style="left:1860.7px;top:274.7px;width:4.8px;height:1.6px;background:#4ec9b0;opacity:.5"></div><div class="a" style="left:1866.7px;top:274.7px;width:4.8px;height:1.6px;background:#9cdcfe;opacity:.5"></div><div class="a" style="left:1872.7px;top:274.7px;width:9.6px;height:1.6px;background:#9cdcfe;opacity:.5"></div><div class="a" style="left:1883.5px;top:274.7px;width:1.2px;height:1.6px;background:#d4d4d4;opacity:.5"></div><div class="a" style="left:1808.7px;top:276.7px;width:6.0px;height:1.6px;background:#4ec9b0;opacity:.5"></div><div class="a" style="left:1815.9px;top:276.7px;width:6.0px;height:1.6px;background:#4ec9b0;opacity:.5"></div><div class="a" style="left:1823.1px;top:276.7px;width:6.0px;height:1.6px;background:#ce9178;opacity:.5"></div><div class="a" style="left:1830.3px;top:276.7px;width:2.4px;height:1.6px;background:#569cd6;opacity:.5"></div><div class="a" style="left:1833.9px;top:276.7px;width:9.6px;height:1.6px;background:#9cdcfe;opacity:.5"></div><div class="a" style="left:1844.7px;top:276.7px;width:2.4px;height:1.6px;background:#569cd6;opacity:.5"></div><div class="a" style="left:1848.3px;top:276.7px;width:0.1px;height:1.6px;background:#ce9178;opacity:.5"></div><div class="a" style="left:1810.7px;top:278.7px;width:4.8px;height:1.6px;background:#4ec9b0;opacity:.5"></div><div class="a" style="left:1816.7px;top:278.7px;width:9.6px;height:1.6px;background:#ce9178;opacity:.5"></div><div class="a" style="left:1827.5px;top:278.7px;width:7.2px;height:1.6px;background:#569cd6;opacity:.5"></div><div class="a" style="left:1835.9px;top:278.7px;width:3.6px;height:1.6px;background:#4ec9b0;opacity:.5"></div><div class="a" style="left:1840.7px;top:278.7px;width:6.0px;height:1.6px;background:#4ec9b0;opacity:.5"></div><div class="a" style="left:1812.7px;top:280.7px;width:6.0px;height:1.6px;background:#4ec9b0;opacity:.5"></div><div class="a" style="left:1819.9px;top:280.7px;width:0.7px;height:1.6px;background:#4ec9b0;opacity:.5"></div><div class="a" style="left:1814.7px;top:282.7px;width:7.9px;height:1.6px;background:#4ec9b0;opacity:.5"></div><div class="a" style="left:1816.7px;top:284.7px;width:3.6px;height:1.6px;background:#4ec9b0;opacity:.5"></div><div class="a" style="left:1821.5px;top:284.7px;width:9.1px;height:1.6px;background:#d4d4d4;opacity:.5"></div><div class="a" style="left:1816.7px;top:286.7px;width:4.8px;height:1.6px;background:#4ec9b0;opacity:.5"></div><div class="a" style="left:1822.7px;top:286.7px;width:7.9px;height:1.6px;background:#569cd6;opacity:.5"></div><div class="a" style="left:1816.7px;top:288.7px;width:4.0px;height:1.6px;background:#4ec9b0;opacity:.5"></div><div class="a" style="left:1818.0px;top:290.7px;width:6.0px;height:1.6px;background:#4ec9b0;opacity:.5"></div><div class="a" style="left:1825.2px;top:290.7px;width:6.0px;height:1.6px;background:#d4d4d4;opacity:.5"></div><div class="a" style="left:1832.4px;top:290.7px;width:2.4px;height:1.6px;background:#569cd6;opacity:.5"></div><div class="a" style="left:1836.0px;top:290.7px;width:3.6px;height:1.6px;background:#ce9178;opacity:.5"></div><div class="a" style="left:1840.8px;top:290.7px;width:2.4px;height:1.6px;background:#d4d4d4;opacity:.5"></div><div class="a" style="left:1844.4px;top:290.7px;width:2.4px;height:1.6px;background:#ce9178;opacity:.5"></div><div class="a" style="left:1848.0px;top:290.7px;width:5.1px;height:1.6px;background:#4ec9b0;opacity:.5"></div><div class="a" style="left:1818.7px;top:292.7px;width:7.2px;height:1.6px;background:#4ec9b0;opacity:.5"></div><div class="a" style="left:1827.1px;top:292.7px;width:6.0px;height:1.6px;background:#ce9178;opacity:.5"></div><div class="a" style="left:1834.3px;top:292.7px;width:6.0px;height:1.6px;background:#9cdcfe;opacity:.5"></div><div class="a" style="left:1841.5px;top:292.7px;width:3.6px;height:1.6px;background:#4ec9b0;opacity:.5"></div><div class="a" style="left:1846.3px;top:292.7px;width:7.2px;height:1.6px;background:#4ec9b0;opacity:.5"></div><div class="a" style="left:1854.7px;top:292.7px;width:2.4px;height:1.6px;background:#569cd6;opacity:.5"></div><div class="a" style="left:1816.7px;top:294.7px;width:1.3px;height:1.6px;background:#4ec9b0;opacity:.5"></div><div class="a" style="left:1814.7px;top:296.7px;width:1.3px;height:1.6px;background:#4ec9b0;opacity:.5"></div><div class="a" style="left:1812.7px;top:298.7px;width:3.6px;height:1.6px;background:#4ec9b0;opacity:.5"></div><div class="a" style="left:1817.5px;top:298.7px;width:1.2px;height:1.6px;background:#569cd6;opacity:.5"></div><div class="a" style="left:1812.7px;top:300.7px;width:4.8px;height:1.6px;background:#4ec9b0;opacity:.5"></div><div class="a" style="left:1818.7px;top:300.7px;width:2.4px;height:1.6px;background:#ce9178;opacity:.5"></div><div class="a" style="left:1822.3px;top:300.7px;width:0.3px;height:1.6px;background:#d4d4d4;opacity:.5"></div><div class="a" style="left:1814.7px;top:302.7px;width:6.0px;height:1.6px;background:#4ec9b0;opacity:.5"></div><div class="a" style="left:1821.9px;top:302.7px;width:6.0px;height:1.6px;background:#4ec9b0;opacity:.5"></div><div class="a" style="left:1829.1px;top:302.7px;width:3.6px;height:1.6px;background:#4ec9b0;opacity:.5"></div><div class="a" style="left:1833.9px;top:302.7px;width:6.0px;height:1.6px;background:#d4d4d4;opacity:.5"></div><div class="a" style="left:1841.1px;top:302.7px;width:6.0px;height:1.6px;background:#ce9178;opacity:.5"></div><div class="a" style="left:1848.3px;top:302.7px;width:9.6px;height:1.6px;background:#9cdcfe;opacity:.5"></div><div class="a" style="left:1859.1px;top:302.7px;width:6.0px;height:1.6px;background:#ce9178;opacity:.5"></div><div class="a" style="left:1866.3px;top:302.7px;width:2.6px;height:1.6px;background:#ce9178;opacity:.5"></div><div class="a" style="left:1814.7px;top:304.7px;width:2.4px;height:1.6px;background:#4ec9b0;opacity:.5"></div><div class="a" style="left:1818.3px;top:304.7px;width:0.4px;height:1.6px;background:#4ec9b0;opacity:.5"></div><div class="a" style="left:1810.7px;top:306.7px;width:4.8px;height:1.6px;background:#4ec9b0;opacity:.5"></div><div class="a" style="left:1816.7px;top:306.7px;width:0.6px;height:1.6px;background:#d4d4d4;opacity:.5"></div><div class="a" style="left:1808.7px;top:308.7px;width:2.4px;height:1.6px;background:#4ec9b0;opacity:.5"></div><div class="a" style="left:1812.3px;top:308.7px;width:2.4px;height:1.6px;background:#4ec9b0;opacity:.5"></div><div class="a" style="left:1806.7px;top:310.7px;width:5.3px;height:1.6px;background:#4ec9b0;opacity:.5"></div><div class="a" style="left:1806.7px;top:312.7px;width:4.8px;height:1.6px;background:#4ec9b0;opacity:.5"></div><div class="a" style="left:1812.7px;top:312.7px;width:4.8px;height:1.6px;background:#ce9178;opacity:.5"></div><div class="a" style="left:1818.7px;top:312.7px;width:2.4px;height:1.6px;background:#d4d4d4;opacity:.5"></div><div class="a" style="left:1822.3px;top:312.7px;width:6.0px;height:1.6px;background:#569cd6;opacity:.5"></div><div class="a" style="left:1829.5px;top:312.7px;width:2.4px;height:1.6px;background:#ce9178;opacity:.5"></div><div class="a" style="left:1833.1px;top:312.7px;width:6.0px;height:1.6px;background:#ce9178;opacity:.5"></div><div class="a" style="left:1840.3px;top:312.7px;width:2.4px;height:1.6px;background:#ce9178;opacity:.5"></div><div class="a" style="left:1843.9px;top:312.7px;width:2.4px;height:1.6px;background:#4ec9b0;opacity:.5"></div><div class="a" style="left:1847.5px;top:312.7px;width:9.6px;height:1.6px;background:#ce9178;opacity:.5"></div><div class="a" style="left:1858.3px;top:312.7px;width:9.6px;height:1.6px;background:#9cdcfe;opacity:.5"></div><div class="a" style="left:1869.1px;top:312.7px;width:3.6px;height:1.6px;background:#ce9178;opacity:.5"></div><div class="a" style="left:1873.9px;top:312.7px;width:1.6px;height:1.6px;background:#569cd6;opacity:.5"></div><div class="a" style="left:1808.7px;top:314.7px;width:4.8px;height:1.6px;background:#4ec9b0;opacity:.5"></div><div class="a" style="left:1814.7px;top:314.7px;width:3.6px;height:1.6px;background:#ce9178;opacity:.5"></div><div class="a" style="left:1819.5px;top:314.7px;width:6.0px;height:1.6px;background:#4ec9b0;opacity:.5"></div><div class="a" style="left:1826.7px;top:314.7px;width:9.6px;height:1.6px;background:#d4d4d4;opacity:.5"></div><div class="a" style="left:1837.5px;top:314.7px;width:7.2px;height:1.6px;background:#569cd6;opacity:.5"></div><div class="a" style="left:1845.9px;top:314.7px;width:3.6px;height:1.6px;background:#4ec9b0;opacity:.5"></div><div class="a" style="left:1850.7px;top:314.7px;width:2.4px;height:1.6px;background:#d4d4d4;opacity:.5"></div><div class="a" style="left:1854.3px;top:314.7px;width:6.0px;height:1.6px;background:#569cd6;opacity:.5"></div><div class="a" style="left:1861.5px;top:314.7px;width:3.6px;height:1.6px;background:#ce9178;opacity:.5"></div><div class="a" style="left:1866.3px;top:314.7px;width:6.0px;height:1.6px;background:#4ec9b0;opacity:.5"></div><div class="a" style="left:1873.5px;top:314.7px;width:7.2px;height:1.6px;background:#9cdcfe;opacity:.5"></div><div class="a" style="left:1881.9px;top:314.7px;width:3.6px;height:1.6px;background:#d4d4d4;opacity:.5"></div><div class="a" style="left:1886.7px;top:314.7px;width:6.0px;height:1.6px;background:#ce9178;opacity:.5"></div><div class="a" style="left:1893.9px;top:314.7px;width:4.8px;height:1.6px;background:#ce9178;opacity:.5"></div><div class="a" style="left:1899.9px;top:314.7px;width:2.1px;height:1.6px;background:#ce9178;opacity:.5"></div><div class="a" style="left:1810.7px;top:316.7px;width:6.0px;height:1.6px;background:#4ec9b0;opacity:.5"></div><div class="a" style="left:1817.9px;top:316.7px;width:0.7px;height:1.6px;background:#9cdcfe;opacity:.5"></div><div class="a" style="left:1812.7px;top:318.7px;width:4.8px;height:1.6px;background:#4ec9b0;opacity:.5"></div><div class="a" style="left:1818.7px;top:318.7px;width:6.0px;height:1.6px;background:#569cd6;opacity:.5"></div><div class="a" style="left:1825.9px;top:318.7px;width:5.3px;height:1.6px;background:#d4d4d4;opacity:.5"></div><div class="a" style="left:1810.7px;top:320.7px;width:2.4px;height:1.6px;background:#4ec9b0;opacity:.5"></div><div class="a" style="left:1814.3px;top:320.7px;width:3.6px;height:1.6px;background:#9cdcfe;opacity:.5"></div><div class="a" style="left:1819.1px;top:320.7px;width:2.4px;height:1.6px;background:#9cdcfe;opacity:.5"></div><div class="a" style="left:1822.7px;top:320.7px;width:7.2px;height:1.6px;background:#d4d4d4;opacity:.5"></div><div class="a" style="left:1831.1px;top:320.7px;width:6.1px;height:1.6px;background:#9cdcfe;opacity:.5"></div><div class="a" style="left:1810.7px;top:322.7px;width:6.0px;height:1.6px;background:#4ec9b0;opacity:.5"></div><div class="a" style="left:1817.9px;top:322.7px;width:4.8px;height:1.6px;background:#d4d4d4;opacity:.5"></div><div class="a" style="left:1823.9px;top:322.7px;width:4.0px;height:1.6px;background:#9cdcfe;opacity:.5"></div><div class="a" style="left:1808.7px;top:324.7px;width:2.0px;height:1.6px;background:#4ec9b0;opacity:.5"></div><div class="a" style="left:1806.7px;top:326.7px;width:3.6px;height:1.6px;background:#4ec9b0;opacity:.5"></div><div class="a" style="left:1804.8px;top:328.7px;width:3.6px;height:1.6px;background:#4ec9b0;opacity:.5"></div><div class="a" style="left:1802.8px;top:330.7px;width:2.4px;height:1.6px;background:#4ec9b0;opacity:.5"></div><div class="a" style="left:1806.4px;top:330.7px;width:1.0px;height:1.6px;background:#ce9178;opacity:.5"></div><div class="a" style="left:1800.8px;top:332.7px;width:4.6px;height:1.6px;background:#4ec9b0;opacity:.5"></div><div class="a" style="left:1798.8px;top:334.7px;width:2.4px;height:1.6px;background:#4ec9b0;opacity:.5"></div><div class="a" style="left:1802.4px;top:334.7px;width:1.0px;height:1.6px;background:#9cdcfe;opacity:.5"></div><div class="a" style="left:1796.8px;top:336.7px;width:4.6px;height:1.6px;background:#4ec9b0;opacity:.5"></div><div class="a" style="left:1794.2px;top:338.7px;width:1.3px;height:1.6px;background:#9cdcfe;opacity:.5"></div><div class="a" style="left:1792.2px;top:340.7px;width:1.3px;height:1.6px;background:#9cdcfe;opacity:.5"></div><div class="a" style="left:1792.2px;top:344.7px;width:3.6px;height:1.6px;background:#c586c0;opacity:.5"></div><div class="a" style="left:1797.0px;top:344.7px;width:2.4px;height:1.6px;background:#c586c0;opacity:.5"></div><div class="a" style="left:1800.6px;top:344.7px;width:6.0px;height:1.6px;background:#c586c0;opacity:.5"></div><div class="a" style="left:1807.8px;top:344.7px;width:4.2px;height:1.6px;background:#ce9178;opacity:.5"></div>
<div class="a" style="left:1786px;top:130.5px;width:2.4px;height:2.0px;background:#0078d4"></div>
<div class="a" style="left:1786px;top:140px;width:2.4px;height:18px;background:#2ea043"></div>
<div class="a" style="left:1786px;top:164px;width:2.4px;height:66px;background:#2ea043"></div>
<div class="a" style="left:1786px;top:245px;width:2.4px;height:1.5px;background:#0078d4"></div>
<div class="a" style="left:1786px;top:258px;width:2.4px;height:13.5px;background:#0078d4"></div>
<div class="a" style="left:1786px;top:310.5px;width:2.4px;height:13.5px;background:#0078d4"></div>
<div class="a" style="left:1903.5px;top:130.4px;width:1px;height:483.6px;background:#111"></div>
<div class="a" style="left:1904.5px;top:131px;width:5.5px;height:4.0px;background:#1b81a8"></div>
<div class="a" style="left:1904.5px;top:147.7px;width:5.5px;height:33.7px;background:#2a7a3f"></div>
<div class="a" style="left:1904.5px;top:194px;width:5.5px;height:123.8px;background:#2a7a3f"></div>
<div class="a" style="left:1904.5px;top:343px;width:5.5px;height:6.6px;background:#1b6ea8"></div>
<div class="a" style="left:1904.5px;top:388.3px;width:5.5px;height:27.2px;background:#1b6ea8"></div>
<div class="a" style="left:1904.5px;top:473.4px;width:5.5px;height:26.6px;background:#1b6ea8"></div>
<div class="a" style="left:1904.5px;top:471.4px;width:15.5px;height:1.8px;background:#a0a0a0"></div>
<div class="a" style="left:262px;top:614px;width:1658px;height:343px;background:#181818;border-top:1px solid #2b2b2b"></div>
<div class="a" style="left:286px;top:624.5px;height:24px;line-height:24px;font-size:12.6px;font-weight:normal;color:#9d9d9d;white-space:pre;letter-spacing:-0.429px">PROBLEMS</div>
<div class="a" style="left:382px;top:624.5px;height:24px;line-height:24px;font-size:12.6px;font-weight:normal;color:#9d9d9d;white-space:pre;letter-spacing:-0.156px">OUTPUT</div>
<div class="a" style="left:462px;top:624.5px;height:24px;line-height:24px;font-size:12.6px;font-weight:normal;color:#9d9d9d;white-space:pre;letter-spacing:-0.323px">DEBUG CONSOLE</div>
<div class="a" style="left:597px;top:624.5px;height:24px;line-height:24px;font-size:12.6px;font-weight:normal;color:#e7e7e7;white-space:pre;letter-spacing:-0.098px">TERMINAL</div>
<div class="a" style="left:689px;top:624.5px;height:24px;line-height:24px;font-size:12.6px;font-weight:normal;color:#9d9d9d;white-space:pre;letter-spacing:-0.539px">PORTS</div>
<div class="a" style="left:594px;top:650.5px;width:69px;height:1.3px;background:#0078d4"></div>
<svg style="left:0;top:0" width="1920" height="983" fill="none" stroke="#cccccc" stroke-width="1.3" stroke-linejoin="round" stroke-linecap="round">
<path d="M1658 625.8l7.8 4.5v9.3l-7.8 4.6-7.8-4.6v-9.3z"/>
<path d="M1659 635.5l6.5-3.8v7.6l-6.5 3.8z" fill="#cccccc"/>
<path d="M1720.2 627v16M1712.3 635h15.8"/>
<path d="M1736.5 633.5l4.2 4.2 4.2-4.2"/>
<rect x="1761" y="627.5" width="15.5" height="15" rx="1.3"/><path d="M1768.8 627.5v15"/>
<path d="M1792 630h13M1795.5 630v-2h6v2M1793.5 630.5l1 12.5h8l1-12.5M1796.5 633v7.5M1798.5 633v7.5M1800.5 633v7.5"/>
<path d="M1855 638.5l6.2-6.2 6.2 6.2"/>
<path d="M1887 630.5l10.5 10.5M1897.5 630.5L1887 641"/>
</svg>
<div class="a" style="left:1673px;top:623.8px;height:24px;line-height:24px;font-size:14.2px;font-weight:normal;color:#cccccc;white-space:pre;letter-spacing:-0.805px">npm</div>
<svg style="left:0;top:0" width="1920" height="700"><circle cx="1824.20" cy="635.3" r="1.25" fill="#cccccc"/><circle cx="1830.45" cy="635.3" r="1.25" fill="#cccccc"/><circle cx="1836.70" cy="635.3" r="1.25" fill="#cccccc"/></svg>
<div class="a" style="left:1908px;top:693px;width:12px;height:263px;background:#3c3c3c"></div>
<div class="a mono" style="left:286px;top:693px;height:20px;line-height:20px;font-size:16.67px;white-space:pre;transform:translateY(2.7px) scaleY(1.12);transform-origin:0 11px"><span style="color:#cccccc">[eslint]</span></div>
<div class="a mono" style="left:286px;top:713px;height:20px;line-height:20px;font-size:16.67px;white-space:pre;transform:translateY(2.7px) scaleY(1.12);transform-origin:0 11px"><span style="color:#cccccc">src/pages/Login/Login.js</span></div>
<div class="a mono" style="left:286px;top:733px;height:20px;line-height:20px;font-size:16.67px;white-space:pre;transform:translateY(2.7px) scaleY(1.12);transform-origin:0 11px"><span style="color:#cccccc">  </span><span style="color:#e5e5e5;font-weight:bold">Line 17:9:</span><span style="color:#cccccc">  'navigate' is assigned a value but never used  </span><span style="color:#e5e510;text-decoration:underline;text-decoration-thickness:1px;text-underline-offset:1px">no-unused-vars</span></div>
<div class="a mono" style="left:286px;top:773px;height:20px;line-height:20px;font-size:16.67px;white-space:pre;transform:translateY(2.7px) scaleY(1.12);transform-origin:0 11px"><span style="color:#cccccc">Search for the </span><span style="color:#e5e510;text-decoration:underline;text-decoration-thickness:1px;text-underline-offset:1px">keywords</span><span style="color:#cccccc"> to learn more about each warning.</span></div>
<div class="a mono" style="left:286px;top:793px;height:20px;line-height:20px;font-size:16.67px;white-space:pre;transform:translateY(2.7px) scaleY(1.12);transform-origin:0 11px"><span style="color:#cccccc">To ignore, add </span><span style="color:#11a8cd">// eslint-disable-next-line</span><span style="color:#cccccc"> to the line before.</span></div>
<div class="a mono" style="left:286px;top:833px;height:20px;line-height:20px;font-size:16.67px;white-space:pre;transform:translateY(2.7px) scaleY(1.12);transform-origin:0 11px"><span style="color:#f5f543;font-weight:bold">WARNING</span><span style="color:#cccccc"> in [eslint]</span></div>
<div class="a mono" style="left:286px;top:853px;height:20px;line-height:20px;font-size:16.67px;white-space:pre;transform:translateY(2.7px) scaleY(1.12);transform-origin:0 11px"><span style="color:#cccccc">src/pages/Login/Login.js</span></div>
<div class="a mono" style="left:286px;top:873px;height:20px;line-height:20px;font-size:16.67px;white-space:pre;transform:translateY(2.7px) scaleY(1.12);transform-origin:0 11px"><span style="color:#cccccc">  </span><span style="color:#e5e5e5;font-weight:bold">Line 17:9:</span><span style="color:#cccccc">  'navigate' is assigned a value but never used  </span><span style="color:#e5e510;text-decoration:underline;text-decoration-thickness:1px;text-underline-offset:1px">no-unused-vars</span></div>
<div class="a mono" style="left:286px;top:913px;height:20px;line-height:20px;font-size:16.67px;white-space:pre;transform:translateY(2.7px) scaleY(1.12);transform-origin:0 11px"><span style="color:#cccccc">webpack compiled with </span><span style="color:#f5f543;font-weight:bold">1 warning</span></div>
<div class="a" style="left:286px;top:934px;width:10.5px;height:19.5px;border:1px solid #cccccc"></div>
<div class="a" style="left:0;top:956.6px;width:1920px;height:26.4px;background:#181818;border-top:1px solid #2b2b2b"></div>
<div class="a" style="left:0;top:957.4px;width:40.7px;height:24.6px;background:#0078d4"></div>
<div class="a" style="left:0;top:982px;width:1920px;height:1px;background:#1d1d1d"></div>
<div class="a" style="left:68.7px;top:957.0px;height:24px;line-height:24px;font-size:14.4px;font-weight:normal;color:#cccccc;white-space:pre;letter-spacing:0.389px">development*</div>
<div class="a" style="left:223px;top:957.0px;height:24px;line-height:24px;font-size:14.4px;font-weight:normal;color:#cccccc;white-space:pre;letter-spacing:-1.516px">0</div>
<div class="a" style="left:255px;top:957.0px;height:24px;line-height:24px;font-size:14.4px;font-weight:normal;color:#cccccc;white-space:pre;letter-spacing:-1.016px">0</div>
<div class="a" style="left:302px;top:957.0px;height:24px;line-height:24px;font-size:14.4px;font-weight:normal;color:#cccccc;white-space:pre;letter-spacing:-1.016px">0</div>
<div class="a" style="left:349.7px;top:957.0px;height:24px;line-height:24px;font-size:14.4px;font-weight:normal;color:#cccccc;white-space:pre;letter-spacing:-0.390px">Live Share</div>
<div class="a" style="left:435px;top:957.0px;height:24px;line-height:24px;font-size:14.4px;font-weight:normal;color:#cccccc;white-space:pre;letter-spacing:-0.174px">Git Graph</div>
<div class="a" style="left:1260.2px;top:957.0px;height:24px;line-height:24px;font-size:14.4px;font-weight:normal;color:#cccccc;white-space:pre;letter-spacing:-0.256px">Ln 106, Col 83</div>
<div class="a" style="left:1370px;top:957.0px;height:24px;line-height:24px;font-size:14.4px;font-weight:normal;color:#cccccc;white-space:pre;letter-spacing:-0.575px">Spaces: 2</div>
<div class="a" style="left:1449.5px;top:957.0px;height:24px;line-height:24px;font-size:14.4px;font-weight:normal;color:#cccccc;white-space:pre;letter-spacing:-0.945px">UTF-8</div>
<div class="a" style="left:1506.3px;top:957.0px;height:24px;line-height:24px;font-size:14.4px;font-weight:normal;color:#cccccc;white-space:pre;letter-spacing:-1.797px">LF</div>
<div class="a" style="left:1562px;top:957.0px;height:24px;line-height:24px;font-size:14.4px;font-weight:normal;color:#cccccc;white-space:pre;letter-spacing:-0.021px">JavaScript</div>
<div class="a" style="left:1666px;top:957.0px;height:24px;line-height:24px;font-size:14.4px;font-weight:normal;color:#cccccc;white-space:pre;letter-spacing:-0.435px">Go Live</div>
<div class="a" style="left:1769px;top:957.0px;height:24px;line-height:24px;font-size:14.4px;font-weight:normal;color:#cccccc;white-space:pre;letter-spacing:0.422px">Formatting:</div>
<svg style="left:0;top:0" width="1920" height="983" fill="none" stroke="#cccccc" stroke-width="1.2" stroke-linejoin="round" stroke-linecap="round">
<path d="M15.5 973.5l4.5-4.5-4.5-4.5M25.5 962l-4 4 4 4" stroke="#ffffff"/>
<circle cx="52.5" cy="962" r="2.2"/><circle cx="52.5" cy="974.5" r="2.2"/><circle cx="60" cy="966" r="2.2"/>
<path d="M52.5 964.2v8.1M60 968.2c0 2.3-2.2 2.8-4.5 2.8h-3"/>
<path d="M171.3 968.2a6.3 6.3 0 0 1 12.4-1.2M183.7 969.6a6.3 6.3 0 0 1-12.4 1.2"/><path d="M181.3 966.4l2.6 2.8 2-3.2z M173.7 971.3l-2.6-2.8-2 3.2z" fill="#cccccc"/>
<circle cx="210.5" cy="969" r="7"/><path d="M207.5 966l6 6M213.5 966l-6 6"/>
<path d="M242 961.5l7.5 13.5h-15z M242 966.5v4.2M242 972.6v.6"/>
<circle cx="290" cy="967.5" r="1.5"/><path d="M287 976.5l3-7.5 3 7.5M288 973.5h4M286.8 964.3a4.5 4.5 0 0 0 0 6.4M293.2 964.3a4.5 4.5 0 0 1 0 6.4M284.5 962a8 8 0 0 0 0 11M295.5 962a8 8 0 0 1 0 11"/>
<path d="M330.2 970.2c.9-4.2 4.4-6.6 9.6-6.6v-3.1l5.3 4.8-5.3 4.8v-3.1c-4.1 0-7.1 1.1-9.6 3.2z"/><circle cx="336.3" cy="973.4" r="2.4"/>
<path d="M1543 962.5c-2 0-2 .5-2 2.5v2c0 1.5-.5 2-1.5 2 1 0 1.5.5 1.5 2v2c0 2 0 2.5 2 2.5M1551 962.5c2 0 2 .5 2 2.5v2c0 1.5.5 2 1.5 2-1 0-1.5.5-1.5 2v2c0 2 0 2.5-2 2.5"/>
<circle cx="1654.5" cy="967.6" r="1.5"/><path d="M1654.5 969.2v6.2M1651.8 970.4a3.9 3.9 0 1 1 5.4 0"/><path d="M1650.1 972.3a6.3 6.3 0 1 1 8.8 0"/>
<path d="M1735 966.5a7.5 7.5 0 0 1 12-2.5"/>
<path d="M1853 969.5l3.5 4 8-9"/>
<path d="M1888.3 972.5v-5.5a4.7 4.7 0 0 1 9.4 0v5.5l1.4 1.6h-12.2z M1891.3 975.2a1.7 1.7 0 0 0 3.4 0"/>
</svg></body></html>
